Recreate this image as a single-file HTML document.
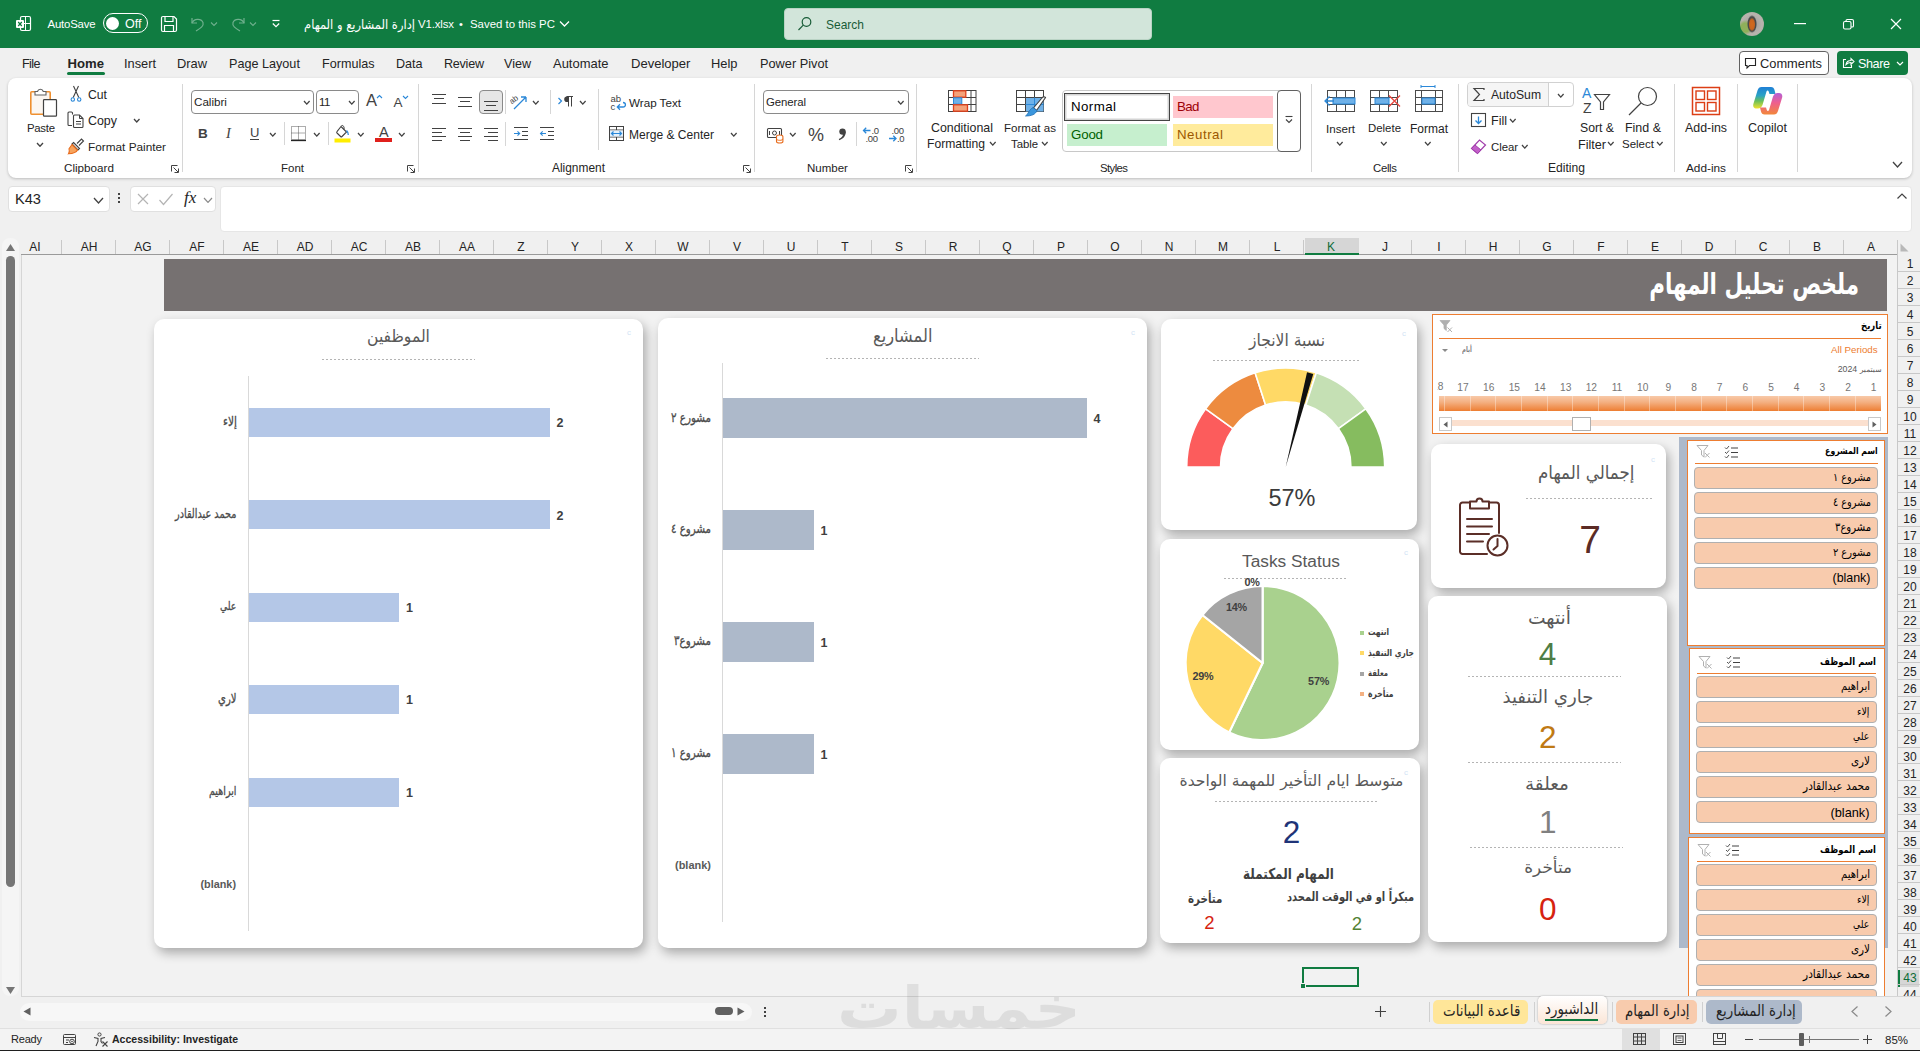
<!DOCTYPE html>
<html lang="ar">
<head>
<meta charset="utf-8">
<title>Excel</title>
<style>
*{box-sizing:border-box;margin:0;padding:0}
html,body{width:1920px;height:1051px;overflow:hidden;background:#f0f0f0}
body{font-family:"Liberation Sans","DejaVu Sans",sans-serif;font-size:12px;color:#242424;position:relative}
.abs{position:absolute}
.t{position:absolute;white-space:nowrap;line-height:1}
.ar{font-family:"DejaVu Sans","Liberation Sans",sans-serif;direction:rtl}
#titlebar{position:absolute;left:0;top:0;width:1920px;height:48px;background:#107c41}
#titlebar .t{color:#fff;font-size:12.5px}
#tabs .t{font-size:13.5px;color:#242424;top:56px}
#ribbon{position:absolute;left:8px;top:78px;width:1904px;height:100px;background:#fff;border-radius:8px;box-shadow:0 1px 3px rgba(0,0,0,.22)}
#ribbon .t{font-size:12.3px;color:#242424}
#ribbon .grp{font-size:12px;color:#3b3b3b}
.sep{position:absolute;width:1px;background:#d6d6d6}
.combo{position:absolute;border:1px solid #8a8a8a;border-radius:4px;background:#fff;height:24px}
.card{position:absolute;background:#fff;border-radius:10px;box-shadow:3px 5px 11px rgba(0,0,0,.3)}
.dash{position:absolute;height:1px;border:0;background:repeating-linear-gradient(90deg,#b4b4b4 0 2px,transparent 2px 4px)}
.colh{position:absolute;top:241px;font-size:12px;color:#242424;width:54px;text-align:center;line-height:12px}
.colsep{position:absolute;top:240px;width:1px;height:14px;background:#c8c8c8}
.rowh{position:absolute;left:1899px;width:22px;text-align:center;font-size:12px;color:#242424;line-height:12px}
.rowsep{position:absolute;left:1899px;width:22px;height:1px;background:#c8c8c8}
.sl{position:absolute;background:#fff;border:1px solid #ed7d31}
.sli{position:absolute;background:#f8cbad;border:1px solid #b5b5b5;border-radius:4px;height:19px;font-size:12.5px;color:#000;text-align:right;padding-right:6px;line-height:17px;direction:rtl}
.slh{position:absolute;font-weight:bold;font-size:11px;color:#000;direction:rtl;white-space:nowrap}
.big{font-family:"Liberation Sans","DejaVu Sans",sans-serif}
</style>
</head>
<body>
<div id="titlebar">
  <!-- excel icon -->
  <svg class="abs" style="left:15px;top:15px" width="18" height="18" viewBox="0 0 18 18"><rect x="5.5" y="1.5" width="10" height="14" rx="1.5" fill="none" stroke="#fff" stroke-width="1.2"/><line x1="10.5" y1="1.5" x2="10.5" y2="15.5" stroke="#fff" stroke-width="1"/><line x1="5.5" y1="8.5" x2="15.5" y2="8.5" stroke="#fff" stroke-width="1"/><rect x="1" y="5" width="8" height="8" rx="1" fill="#fff"/><path d="M3.2 7 L6.8 11 M6.8 7 L3.2 11" stroke="#107c41" stroke-width="1.2"/></svg>
  <div class="t" style="left:47.5px;top:19px;font-size:11.40px;letter-spacing:-0.20px;color:#fff;">AutoSave</div>
  <div class="abs" style="left:103px;top:13px;width:45px;height:20px;border:1.3px solid #fff;border-radius:10px"></div>
  <div class="abs" style="left:106px;top:17px;width:13px;height:13px;border-radius:6.500px;background:#fff"></div>
  <div class="t" style="left:125.0px;top:18px;font-size:12.54px;color:#fff;">Off</div>
  <!-- save -->
  <svg class="abs" style="left:160px;top:15px" width="18" height="18" viewBox="0 0 18 18" fill="none" stroke="#fff" stroke-width="1.2"><path d="M1.5 3 a1.5 1.5 0 0 1 1.5-1.5 h11 l2.5 2.5 v11 a1.5 1.5 0 0 1 -1.5 1.5 h-12 a1.5 1.5 0 0 1 -1.5 -1.5z"/><path d="M5 1.5v5h8v-5"/><path d="M4.5 16.5v-6h9v6"/></svg>
  <!-- undo / redo faded -->
  <svg class="abs" style="left:189px;top:15px" width="18" height="18" viewBox="0 0 18 18" fill="none" stroke="#6fb08d" stroke-width="1.2"><path d="M3 3v5h5"/><path d="M3 8 C5 3.5 12 3 14 7.5 C15 11 12 13 7 16"/></svg>
  <svg class="abs" style="left:210px;top:21px" width="8" height="6" viewBox="0 0 8 6" fill="none" stroke="#6fb08d" stroke-width="1.1"><path d="M1 1.5l3 3 3-3"/></svg>
  <svg class="abs" style="left:229px;top:15px" width="18" height="18" viewBox="0 0 18 18" fill="none" stroke="#6fb08d" stroke-width="1.2"><path d="M15 3v5h-5"/><path d="M15 8 C13 3.5 6 3 4 7.5 C3 11 6 13 11 16"/></svg>
  <svg class="abs" style="left:249px;top:21px" width="8" height="6" viewBox="0 0 8 6" fill="none" stroke="#6fb08d" stroke-width="1.1"><path d="M1 1.5l3 3 3-3"/></svg>
  <svg class="abs" style="left:271px;top:19px" width="10" height="10" viewBox="0 0 10 10" fill="none" stroke="#fff" stroke-width="1.2"><path d="M1.5 1.5h7"/><path d="M1.8 4.5l3.2 3.2 3.2-3.2"/></svg>
  <div class="t" style="left:304.0px;width:311.0px;text-align:left;direction:ltr;top:19px;font-size:12.90px;color:#fff;font-family:'DejaVu Sans',sans-serif;transform:scaleX(0.893);transform-origin:0 50%;"><span dir="rtl">إدارة المشاريع و المهام</span></div>
<div class="t" style="left:418.0px;top:19px;font-size:11.40px;letter-spacing:-0.12px;color:#fff;">V1.xlsx</div>
<div class="t" style="left:459.0px;top:19px;font-size:11.00px;letter-spacing:0.15px;color:#fff;">•</div>
<div class="t" style="left:470.0px;top:19px;font-size:11.41px;color:#fff;">Saved to this PC</div>
  <svg class="abs" style="left:559px;top:20px" width="11" height="8" viewBox="0 0 11 8" fill="none" stroke="#fff" stroke-width="1.3"><path d="M1 1.5l4.5 4.5 4.5-4.5"/></svg>
  <!-- search -->
  <div class="abs" style="left:784px;top:8px;width:368px;height:32px;background:#d2e5da;border-radius:4px;border:1px solid #b9d3c4"></div>
  <svg class="abs" style="left:797px;top:16px" width="16" height="16" viewBox="0 0 16 16" fill="none" stroke="#185c37" stroke-width="1.2"><circle cx="9.5" cy="6" r="4.3"/><path d="M6.3 9.2L1.5 14"/></svg>
  <div class="t" style="left:826.0px;top:19px;font-size:11.99px;color:#185c37;">Search</div>
  <!-- avatar -->
  <div class="abs" style="left:1740px;top:12px;width:24px;height:24px;border-radius:12px;background:radial-gradient(ellipse 3.500px 7px at 50% 52%,#d2691e 0,#c8641e 70%,rgba(200,100,30,0) 100%),radial-gradient(ellipse 5px 9px at 50% 50%,#4a4a4a 0,#4a4a4a 80%,rgba(74,74,74,0) 100%),radial-gradient(circle at 22% 65%,#8fb05a 0,#8fb05a 18%,rgba(143,176,90,0) 32%),radial-gradient(circle at 50% 50%,#9a9a9a 0,#b8b4ae 60%,#a8a29a 100%)"></div>
  <svg class="abs" style="left:1794px;top:23px" width="12" height="2" viewBox="0 0 12 2"><rect width="12" height="1.2" fill="#fff"/></svg>
  <svg class="abs" style="left:1842px;top:18px" width="13" height="13" viewBox="0 0 13 13" fill="none" stroke="#fff" stroke-width="1.100"><rect x="1.500" y="3.500" width="7.500" height="7.500" rx="1.500"/><path d="M4 3.500V2.800a1.300 1.300 0 0 1 1.300-1.300H10a1.500 1.500 0 0 1 1.500 1.500v4.700a1.300 1.300 0 0 1-1.300 1.300H9"/></svg>
  <svg class="abs" style="left:1890px;top:18px" width="12" height="12" viewBox="0 0 12 12" fill="none" stroke="#fff" stroke-width="1.2"><path d="M1 1l10 10M11 1L1 11"/></svg>
</div>
<div id="tabs">
  <div class="t" style="left:22.0px;top:58px;font-size:12.60px;letter-spacing:-0.60px;">File</div>
  <div class="t" style="left:67.5px;top:57px;font-size:13.14px;font-weight:bold;">Home</div>
  <div class="abs" style="left:67px;top:72px;width:37.500px;height:2.500px;background:#107c41;border-radius:1.5px"></div>
  <div class="t" style="left:124.0px;top:58px;font-size:12.80px;">Insert</div>
  <div class="t" style="left:177.0px;top:58px;font-size:12.86px;">Draw</div>
  <div class="t" style="left:229.0px;top:58px;font-size:12.64px;">Page Layout</div>
  <div class="t" style="left:322.0px;top:58px;font-size:12.60px;">Formulas</div>
  <div class="t" style="left:396.0px;top:58px;font-size:12.60px;letter-spacing:-0.04px;">Data</div>
  <div class="t" style="left:444.0px;top:58px;font-size:12.60px;letter-spacing:-0.26px;">Review</div>
  <div class="t" style="left:504.0px;top:58px;font-size:12.60px;letter-spacing:-0.03px;">View</div>
  <div class="t" style="left:553.0px;top:58px;font-size:12.97px;">Automate</div>
  <div class="t" style="left:631.0px;top:57px;font-size:13.05px;">Developer</div>
  <div class="t" style="left:711.0px;top:58px;font-size:12.89px;">Help</div>
  <div class="t" style="left:760.0px;top:58px;font-size:12.75px;">Power Pivot</div>
  <div class="abs" style="left:1739px;top:51px;width:90px;height:24px;border:1px solid #616161;border-radius:4px;background:#fff"></div>
  <svg class="abs" style="left:1743.500px;top:57px" width="13" height="13" viewBox="0 0 13 13" fill="none" stroke="#242424" stroke-width="1.1"><path d="M1.5 1.500h10v7h-6l-2.500 2.500v-2.500h-1.500z"/></svg>
  <div class="t" style="left:1760.0px;top:58px;font-size:12.83px;">Comments</div>
  <div class="abs" style="left:1837px;top:51px;width:71px;height:24px;border-radius:4px;background:#107c41"></div>
  <svg class="abs" style="left:1840.500px;top:56px" width="14" height="14" viewBox="0 0 14 14" fill="none" stroke="#fff" stroke-width="1.1"><path d="M5 3.500H2.500v8h8V9"/><path d="M5 8.500C5.500 5.500 7.500 4.500 10 4.500V2.500L13 5.500 10 8.500V6.500C8 6.500 6.500 7 5 8.500z"/></svg>
  <div class="t" style="left:1858.0px;top:58px;font-size:12.60px;letter-spacing:-0.41px;color:#fff;">Share</div>
  <svg class="abs" style="left:1896px;top:61px" width="8" height="6" viewBox="0 0 8 6" fill="none" stroke="#fff" stroke-width="1.2"><path d="M1 1l3 3 3-3"/></svg>
</div>
<div id="ribbon"></div>
<div id="rb" class="abs" style="left:0;top:0">
<svg class="abs" style="left:28px;top:85px" width="30" height="33" viewBox="0 0 30 33" ><rect x="2.800" y="6.800" width="19.400" height="22.400" rx="1" fill="#fbf6f1" stroke="#ef8f2f" stroke-width="1.600"/><path d="M7 6.500h2.500a3 3 0 0 1 5.800 0H18v3.500H7z" fill="#fff" stroke="#616161" stroke-width="1.100"/><rect x="15.500" y="14.700" width="13" height="16.500" rx=".800" fill="#fff" stroke="#424242" stroke-width="1.200"/></svg>
<div class="t" style="left:27.0px;top:123px;font-size:11.40px;letter-spacing:-0.29px;">Paste</div>
<svg class="abs" style="left:36.3px;top:142.0px" width="8.0" height="5.3" viewBox="0 0 8.0 5.3" fill="none" stroke="#424242" stroke-width="1.3"><path d="M1 1l3.00 3.30 3.00 -3.30"/></svg>
<svg class="abs" style="left:69px;top:85px" width="14" height="18" viewBox="0 0 14 18" ><path d="M4.500 1L9.800 12.500M9.500 1L4.200 12.500" stroke="#424242" stroke-width="1.100" fill="none"/><circle cx="3.800" cy="14.500" r="1.700" fill="none" stroke="#2b88d8" stroke-width="1.100"/><circle cx="10.200" cy="14.500" r="1.700" fill="none" stroke="#2b88d8" stroke-width="1.100"/></svg>
<div class="t" style="left:88.0px;top:89px;font-size:12.21px;">Cut</div>
<svg class="abs" style="left:67px;top:111px" width="18" height="18" viewBox="0 0 18 18" ><path d="M5.500 3.500V2a1 1 0 0 0-1-1H2a1 1 0 0 0-1 1v11.500a1 1 0 0 0 1 1h3" fill="none" stroke="#424242" stroke-width="1.100"/><path d="M6.500 5a1 1 0 0 1 1-1h5l3.500 3.500V15.500a1 1 0 0 1-1 1h-7.500a1 1 0 0 1-1-1z" fill="#fff" stroke="#424242" stroke-width="1.100"/><path d="M12.500 4v3.500H16M9 10.500h5M9 13h5" fill="none" stroke="#424242" stroke-width="1"/></svg>
<div class="t" style="left:88.0px;top:115px;font-size:12.42px;">Copy</div>
<svg class="abs" style="left:132.7px;top:118.2px" width="7.5" height="5.0" viewBox="0 0 7.5 5.0" fill="none" stroke="#424242" stroke-width="1.3"><path d="M1 1l2.75 3.03 2.75 -3.03"/></svg>
<svg class="abs" style="left:67px;top:137px" width="18" height="18" viewBox="0 0 18 18" ><path d="M10 6.500l4.500-4.500 2 2L12 8.500" fill="#fff" stroke="#424242" stroke-width="1.100"/><path d="M6.500 5.500l6 6-1.500 1.500-6-6z" fill="#fff" stroke="#424242" stroke-width="1.100"/><path d="M5 7.500l5.500 5.500c-1 2-3.500 3.500-9 3.800 1.500-2 1-3.500 .5-5z" fill="#f7a35c" stroke="#e86a1a" stroke-width="1.100"/></svg>
<div class="t" style="left:88.0px;top:142px;font-size:11.80px;">Format Painter</div>
<div class="t grp" style="left:64.0px;top:162px;font-size:11.68px;">Clipboard</div>
<svg class="abs" style="left:170px;top:164px" width="10" height="10" viewBox="0 0 10 10" ><path d="M1.500 7.500V1.500h6" fill="none" stroke="#424242" stroke-width="1"/><path d="M3.500 3.500l4.500 4.500M8.500 4.500v4h-4" fill="none" stroke="#424242" stroke-width="1"/></svg>
<div class="sep" style="left:182px;top:84px;height:88px;background:#d6d6d6"></div>
<div class="combo" style="left:191px;top:90px;width:123px"></div>
<div class="t" style="left:194.0px;top:96px;font-size:11.64px;">Calibri</div>
<svg class="abs" style="left:303.2px;top:99.5px" width="7.6" height="5.1" viewBox="0 0 7.6 5.1" fill="none" stroke="#424242" stroke-width="1.3"><path d="M1 1l2.80 3.08 2.80 -3.08"/></svg>
<div class="combo" style="left:316px;top:90px;width:43px"></div>
<div class="t" style="left:319.0px;top:97px;font-size:11.40px;letter-spacing:-0.60px;">11</div>
<svg class="abs" style="left:348.2px;top:99.5px" width="7.6" height="5.1" viewBox="0 0 7.6 5.1" fill="none" stroke="#424242" stroke-width="1.3"><path d="M1 1l2.80 3.08 2.80 -3.08"/></svg>
<div class="t" style="left:366.0px;top:92px;font-size:16.49px;color:#424242;">A</div>
<svg class="abs" style="left:375.5px;top:94px" width="7" height="5" viewBox="0 0 7 5" ><path d="M1 4l2.500-2.500L6 4" fill="none" stroke="#2b88d8" stroke-width="1.100"/></svg>
<div class="t" style="left:393.5px;top:96px;font-size:13.49px;color:#424242;">A</div>
<svg class="abs" style="left:401.5px;top:94.5px" width="7" height="5" viewBox="0 0 7 5" ><path d="M1 1l2.500 2.500L6 1" fill="none" stroke="#2b88d8" stroke-width="1.100"/></svg>
<div class="t" style="left:198.0px;top:127px;font-size:13.50px;letter-spacing:-0.60px;font-weight:bold;color:#424242;">B</div>
<div class="t" style="left:226.0px;top:126px;font-size:14.50px;letter-spacing:0.60px;color:#424242;font-style:italic;font-family:'Liberation Serif',serif;">I</div>
<div class="t" style="left:250.0px;top:126px;font-size:13.00px;letter-spacing:-0.60px;color:#424242;">U</div>
<div class="abs" style="left:250px;top:139px;width:9px;height:1px;background:#424242"></div>
<svg class="abs" style="left:269.2px;top:131.5px" width="7.6" height="5.1" viewBox="0 0 7.6 5.1" fill="none" stroke="#424242" stroke-width="1.3"><path d="M1 1l2.80 3.08 2.80 -3.08"/></svg>
<div class="sep" style="left:284px;top:122px;height:23px;background:#d6d6d6"></div>
<svg class="abs" style="left:290px;top:125px" width="16" height="17" viewBox="0 0 16 17" ><rect x="1.500" y="1.500" width="14" height="13" fill="none" stroke="#5a5a5a" stroke-width="1" stroke-dasharray="1 1"/><path d="M8.500 1.500v13M1.500 8h14" stroke="#5a5a5a" stroke-width="1" stroke-dasharray="1 1"/><path d="M1 15.500h15" stroke="#242424" stroke-width="1.300"/></svg>
<svg class="abs" style="left:313.2px;top:131.5px" width="7.6" height="5.1" viewBox="0 0 7.6 5.1" fill="none" stroke="#424242" stroke-width="1.3"><path d="M1 1l2.80 3.08 2.80 -3.08"/></svg>
<div class="sep" style="left:328px;top:122px;height:23px;background:#d6d6d6"></div>
<svg class="abs" style="left:334px;top:124px" width="17" height="19" viewBox="0 0 17 19" ><path d="M7 2.500l5.500 5.500-4.500 4.500a1 1 0 0 1-1.400 0L3 9a1 1 0 0 1 0-1.400z" fill="#fff" stroke="#424242" stroke-width="1.100"/><path d="M7.500 1.500C9.500 1 10.500 3 10 5.500" fill="none" stroke="#424242" stroke-width="1"/><path d="M12.500 6.500c1.500 1.500 2 3 1.800 4.500" fill="none" stroke="#2b88d8" stroke-width="1.300"/><rect x="0.500" y="14.500" width="16" height="4" fill="#ffee00"/></svg>
<svg class="abs" style="left:357.2px;top:131.5px" width="7.6" height="5.1" viewBox="0 0 7.6 5.1" fill="none" stroke="#424242" stroke-width="1.3"><path d="M1 1l2.80 3.08 2.80 -3.08"/></svg>
<div class="t" style="left:379.0px;top:125px;font-size:14.50px;letter-spacing:0.33px;color:#424242;">A</div>
<div class="abs" style="left:375px;top:138px;width:17px;height:4px;background:#e0201c"></div>
<svg class="abs" style="left:398.2px;top:131.5px" width="7.6" height="5.1" viewBox="0 0 7.6 5.1" fill="none" stroke="#424242" stroke-width="1.3"><path d="M1 1l2.80 3.08 2.80 -3.08"/></svg>
<div class="t grp" style="left:281.0px;top:163px;font-size:11.50px;">Font</div>
<svg class="abs" style="left:406px;top:164px" width="10" height="10" viewBox="0 0 10 10" ><path d="M1.500 7.500V1.500h6" fill="none" stroke="#424242" stroke-width="1"/><path d="M3.500 3.500l4.500 4.500M8.500 4.500v4h-4" fill="none" stroke="#424242" stroke-width="1"/></svg>
<div class="sep" style="left:418px;top:84px;height:88px;background:#d6d6d6"></div>
<svg class="abs" style="left:432px;top:94px" width="14" height="10" viewBox="0 0 14 10" shape-rendering="crispEdges"><rect x="0" y="0" width="14" height="1" fill="#424242"/><rect x="2" y="4" width="10" height="1" fill="#424242"/><rect x="0" y="9" width="14" height="1" fill="#424242"/></svg>
<svg class="abs" style="left:458px;top:97px" width="14" height="10" viewBox="0 0 14 10" shape-rendering="crispEdges"><rect x="0" y="0" width="14" height="1" fill="#424242"/><rect x="2" y="4" width="10" height="1" fill="#424242"/><rect x="0" y="9" width="14" height="1" fill="#424242"/></svg>
<div class="abs" style="left:479px;top:90px;width:24px;height:24px;border:1px solid #8a8a8a;border-radius:4px;background:#e6e6e6"></div>
<svg class="abs" style="left:484px;top:101px" width="14" height="10" viewBox="0 0 14 10" shape-rendering="crispEdges"><rect x="0" y="0" width="14" height="1" fill="#424242"/><rect x="2" y="4" width="10" height="1" fill="#424242"/><rect x="0" y="9" width="14" height="1" fill="#424242"/></svg>
<div class="sep" style="left:505px;top:90px;height:24px;background:#d6d6d6"></div>
<svg class="abs" style="left:510px;top:93px" width="20" height="18" viewBox="0 0 20 18" ><text x="1" y="9" font-size="8" font-family="Liberation Sans, sans-serif" fill="#424242" transform="rotate(-38 5 9)">ab</text><path d="M4 16L16 4M16 4h-5M16 4v5" fill="none" stroke="#2b88d8" stroke-width="1.300"/></svg>
<svg class="abs" style="left:532.2px;top:99.5px" width="7.6" height="5.1" viewBox="0 0 7.6 5.1" fill="none" stroke="#424242" stroke-width="1.3"><path d="M1 1l2.80 3.08 2.80 -3.08"/></svg>
<div class="sep" style="left:550px;top:90px;height:24px;background:#d6d6d6"></div>
<svg class="abs" style="left:557px;top:95px" width="17" height="13" viewBox="0 0 17 13" ><path d="M1.500 3l3 3-3 3" fill="none" stroke="#2b88d8" stroke-width="1.200"/><path d="M9.500 1.500h6.500M11.500 1.500v10M14.500 1.500v10" fill="none" stroke="#424242" stroke-width="1"/><path d="M11.500 1.500h-1.500a2.800 2.800 0 0 0 0 5.600h1.500z" fill="#424242"/></svg>
<svg class="abs" style="left:579.2px;top:99.5px" width="7.6" height="5.1" viewBox="0 0 7.6 5.1" fill="none" stroke="#424242" stroke-width="1.3"><path d="M1 1l2.80 3.08 2.80 -3.08"/></svg>
<div class="sep" style="left:598px;top:89px;height:61px;background:#d6d6d6"></div>
<svg class="abs" style="left:432px;top:128px" width="14" height="13" viewBox="0 0 14 13" shape-rendering="crispEdges"><rect x="0" y="0" width="14" height="1" fill="#424242"/><rect x="0" y="4" width="10" height="1" fill="#424242"/><rect x="0" y="8" width="14" height="1" fill="#424242"/><rect x="0" y="12" width="10" height="1" fill="#424242"/></svg>
<svg class="abs" style="left:458px;top:128px" width="14" height="13" viewBox="0 0 14 13" shape-rendering="crispEdges"><rect x="0" y="0" width="14" height="1" fill="#424242"/><rect x="2" y="4" width="10" height="1" fill="#424242"/><rect x="0" y="8" width="14" height="1" fill="#424242"/><rect x="2" y="12" width="10" height="1" fill="#424242"/></svg>
<svg class="abs" style="left:484px;top:128px" width="14" height="13" viewBox="0 0 14 13" shape-rendering="crispEdges"><rect x="0" y="0" width="14" height="1" fill="#424242"/><rect x="4" y="4" width="10" height="1" fill="#424242"/><rect x="0" y="8" width="14" height="1" fill="#424242"/><rect x="4" y="12" width="10" height="1" fill="#424242"/></svg>
<div class="sep" style="left:505px;top:122px;height:24px;background:#d6d6d6"></div>
<svg class="abs" style="left:513px;top:126px" width="16" height="16" viewBox="0 0 16 16" ><path d="M1 1.500h14M9 5.500h6M9 9.500h6M1 13.500h14" stroke="#424242" stroke-width="1.100"/><path d="M1 7.500h5.500M4.500 5.300L6.700 7.500 4.500 9.700" fill="none" stroke="#2b88d8" stroke-width="1.100"/></svg>
<svg class="abs" style="left:539px;top:126px" width="16" height="16" viewBox="0 0 16 16" ><path d="M1 1.500h14M9 5.500h6M9 9.500h6M1 13.500h14" stroke="#424242" stroke-width="1.100"/><path d="M1.500 7.500h5.500M3.700 5.300L1.500 7.500 3.700 9.700" fill="none" stroke="#2b88d8" stroke-width="1.100"/></svg>
<svg class="abs" style="left:610px;top:93px" width="18" height="19" viewBox="0 0 18 19" ><text x="0.500" y="8.500" font-size="9.500" font-family="Liberation Sans, sans-serif" fill="#424242">ab</text><text x="0.500" y="17" font-size="9.500" font-family="Liberation Sans, sans-serif" fill="#424242">c</text><path d="M13 9.500c3 0 3.500 4.500 0 4.500H7.500M10 11.300L7.300 14l2.700 2.700" fill="none" stroke="#2b88d8" stroke-width="1.300"/></svg>
<div class="t" style="left:629.0px;top:97px;font-size:11.65px;">Wrap Text</div>
<svg class="abs" style="left:608px;top:125px" width="18" height="18" viewBox="0 0 18 18" ><rect x="1.500" y="1.500" width="14" height="14" fill="none" stroke="#424242" stroke-width="1"/><path d="M1.500 5h14M1.500 12h14M8.500 1.500V5M8.500 12v3.500" stroke="#424242" stroke-width="1"/><rect x="2" y="5.500" width="13" height="6" fill="#e3f0fb"/><path d="M3.500 8.500h10M5.500 6.500l-2 2 2 2M11.500 6.500l2 2-2 2" fill="none" stroke="#2b88d8" stroke-width="1.200"/></svg>
<div class="t" style="left:629.0px;top:129px;font-size:12.04px;">Merge &amp; Center</div>
<svg class="abs" style="left:730.2px;top:131.5px" width="7.6" height="5.1" viewBox="0 0 7.6 5.1" fill="none" stroke="#424242" stroke-width="1.3"><path d="M1 1l2.80 3.08 2.80 -3.08"/></svg>
<div class="t grp" style="left:552.0px;top:163px;font-size:11.92px;">Alignment</div>
<svg class="abs" style="left:742px;top:164px" width="10" height="10" viewBox="0 0 10 10" ><path d="M1.500 7.500V1.500h6" fill="none" stroke="#424242" stroke-width="1"/><path d="M3.500 3.500l4.500 4.500M8.500 4.500v4h-4" fill="none" stroke="#424242" stroke-width="1"/></svg>
<div class="sep" style="left:754px;top:84px;height:88px;background:#d6d6d6"></div>
<div class="combo" style="left:763px;top:90px;width:146px"></div>
<div class="t" style="left:766.0px;top:97px;font-size:11.40px;letter-spacing:-0.09px;">General</div>
<svg class="abs" style="left:897.2px;top:99.5px" width="7.6" height="5.1" viewBox="0 0 7.6 5.1" fill="none" stroke="#424242" stroke-width="1.3"><path d="M1 1l2.80 3.08 2.80 -3.08"/></svg>
<svg class="abs" style="left:766px;top:126px" width="19" height="18" viewBox="0 0 19 18" ><rect x="1.500" y="2.500" width="14" height="9" rx="1" fill="#fff" stroke="#424242" stroke-width="1.100"/><circle cx="8.500" cy="7" r="2" fill="none" stroke="#424242" stroke-width="1"/><path d="M3.500 5v4M13.500 5v4" stroke="#424242" stroke-width="1"/><path d="M10.500 10.500c0-1 1.500-1.500 3.200-1.500s3.200.5 3.200 1.500v5c0 1-1.500 1.500-3.200 1.500s-3.200-.5-3.200-1.500z" fill="#fff" stroke="#e86a1a" stroke-width="1.100"/><path d="M10.500 12.800c0 1 1.500 1.500 3.200 1.500s3.200-.5 3.200-1.500" fill="none" stroke="#e86a1a" stroke-width="1"/></svg>
<svg class="abs" style="left:789.2px;top:131.5px" width="7.6" height="5.1" viewBox="0 0 7.6 5.1" fill="none" stroke="#424242" stroke-width="1.3"><path d="M1 1l2.80 3.08 2.80 -3.08"/></svg>
<div class="t" style="left:808.0px;top:126px;font-size:17.99px;color:#424242;">%</div>
<svg class="abs" style="left:836px;top:126px" width="12" height="16" viewBox="0 0 12 16" ><circle cx="6.500" cy="5.600" r="3.200" fill="#424242"/><path d="M9.700 5.300C10 10 7.300 12.800 3.300 14.200L2.800 13.100C5.800 11.800 7 10 7 8z" fill="#424242"/></svg>
<div class="sep" style="left:856px;top:122px;height:24px;background:#d6d6d6"></div>
<svg class="abs" style="left:861px;top:125px" width="20" height="18" viewBox="0 0 20 18" ><path d="M2.500 5.500h7M5.200 2.800L2.500 5.500l2.700 2.700" fill="none" stroke="#2b88d8" stroke-width="1.300"/><text x="10.500" y="9" font-size="9.500" font-family="Liberation Sans, sans-serif" fill="#424242" letter-spacing="-.3">.0</text><text x="4.500" y="17" font-size="9.500" font-family="Liberation Sans, sans-serif" fill="#424242" letter-spacing="-.3">.00</text></svg>
<svg class="abs" style="left:887px;top:125px" width="20" height="18" viewBox="0 0 20 18" ><text x="4.500" y="9" font-size="9.500" font-family="Liberation Sans, sans-serif" fill="#424242" letter-spacing="-.3">.00</text><path d="M2 13.500h7M6.300 10.800L9 13.500l-2.700 2.700" fill="none" stroke="#2b88d8" stroke-width="1.300"/><text x="10" y="17" font-size="9.500" font-family="Liberation Sans, sans-serif" fill="#424242" letter-spacing="-.3">.0</text></svg>
<div class="t grp" style="left:807.0px;top:163px;font-size:11.53px;">Number</div>
<svg class="abs" style="left:904px;top:164px" width="10" height="10" viewBox="0 0 10 10" ><path d="M1.500 7.500V1.500h6" fill="none" stroke="#424242" stroke-width="1"/><path d="M3.500 3.500l4.500 4.500M8.500 4.500v4h-4" fill="none" stroke="#424242" stroke-width="1"/></svg>
<div class="sep" style="left:916px;top:84px;height:88px;background:#d6d6d6"></div>
<svg class="abs" style="left:947px;top:89px" width="31" height="24" viewBox="0 0 31 24" ><rect x="1.500" y="1.500" width="27.500" height="21" fill="#fff" stroke="#424242" stroke-width="1"/><path d="M1.500 8.500h27.500M1.500 15.500h27.500M6.500 1.500v21M24 1.500v21" stroke="#424242" stroke-width="1"/><rect x="6.500" y="1.800" width="12.300" height="6.400" fill="#f4a27a" stroke="#e0401c" stroke-width="1.300"/><rect x="6.500" y="8.800" width="8.300" height="6.400" fill="#6fb1e8" stroke="#2b88d8" stroke-width="1"/><rect x="6.500" y="15.800" width="14" height="6.400" fill="#f4a27a" stroke="#e0401c" stroke-width="1.300"/></svg>
<div class="t" style="left:931.0px;top:122px;font-size:12.39px;">Conditional</div>
<div class="t" style="left:927.0px;top:138px;font-size:12.14px;">Formatting</div>
<svg class="abs" style="left:988.7px;top:141.3px" width="7.6" height="5.1" viewBox="0 0 7.6 5.1" fill="none" stroke="#424242" stroke-width="1.3"><path d="M1 1l2.80 3.08 2.80 -3.08"/></svg>
<svg class="abs" style="left:1015px;top:89px" width="32" height="29" viewBox="0 0 32 29" ><rect x="1.500" y="1.500" width="27" height="21" fill="#fff" stroke="#424242" stroke-width="1"/><rect x="10.500" y="8.500" width="18" height="14" fill="#6fb1e8"/><path d="M1.500 8.500h27M1.500 15.500h27M10.500 1.500v21M19.500 1.500v21" stroke="#424242" stroke-width="1"/><path d="M10.500 15.500h18M19.500 8.500v14" stroke="#2b88d8" stroke-width="1"/><path d="M30.500 8.500c-1.500-1.500-3-.5-4 1L18.500 19l3 2.500z" fill="#fff" stroke="#424242" stroke-width="1.100"/><path d="M18 18.500l4 3c-1.500 4-5.500 5.500-11.500 5.500 3-2 3-6 7.500-8.500z" fill="#3a96dd" stroke="#1f6fb5" stroke-width=".800"/></svg>
<div class="t" style="left:1004.0px;top:123px;font-size:11.55px;">Format as</div>
<div class="t" style="left:1011.0px;top:139px;font-size:11.40px;letter-spacing:-0.06px;">Table</div>
<svg class="abs" style="left:1041.2px;top:141.3px" width="7.6" height="5.1" viewBox="0 0 7.6 5.1" fill="none" stroke="#424242" stroke-width="1.3"><path d="M1 1l2.80 3.08 2.80 -3.08"/></svg>
<div class="abs" style="left:1062px;top:90px;width:239px;height:62px;border:1px solid #c8c8c8;border-radius:4px;background:#fff"></div>
<div class="abs" style="left:1277px;top:90px;width:24px;height:62px;border:1px solid #616161;border-radius:4px;background:#fff"></div>
<svg class="abs" style="left:1284px;top:115px" width="10" height="10" viewBox="0 0 10 10" ><path d="M1.500 1.500h7" stroke="#424242" stroke-width="1.100"/><path d="M2 4.500l3 3 3-3" fill="none" stroke="#424242" stroke-width="1.100"/></svg>
<div class="abs" style="left:1064px;top:93px;width:106px;height:28px;border:1px solid #444;background:#fff;box-shadow:inset 0 0 0 1.500px #d4d4d4"></div>
<div class="t" style="left:1071.0px;top:100px;font-size:13.30px;letter-spacing:0.43px;color:#000;">Normal</div>
<div class="abs" style="left:1173px;top:96px;width:100px;height:22px;background:#ffc7ce"></div>
<div class="t" style="left:1177.0px;top:100px;font-size:13.30px;letter-spacing:-0.60px;color:#9c0006;">Bad</div>
<div class="abs" style="left:1067px;top:124px;width:100px;height:22px;background:#c6efce"></div>
<div class="t" style="left:1071.0px;top:128px;font-size:13.30px;letter-spacing:-0.18px;color:#006100;">Good</div>
<div class="abs" style="left:1173px;top:124px;width:100px;height:22px;background:#ffeb9c"></div>
<div class="t" style="left:1177.0px;top:128px;font-size:13.30px;letter-spacing:0.52px;color:#9c5700;">Neutral</div>
<div class="t grp" style="left:1100.0px;top:163px;font-size:11.40px;letter-spacing:-0.60px;">Styles</div>
<div class="sep" style="left:1311px;top:84px;height:88px;background:#d6d6d6"></div>
<svg class="abs" style="left:1324px;top:88px" width="34" height="26" viewBox="0 0 34 26" ><rect x="3.500" y="2.500" width="27" height="21" fill="#fff" stroke="#4a4a4a" stroke-width="1"/><path d="M3.500 9.500h27M3.500 16.500h27M12.500 2.500v21M21.500 2.500v21" stroke="#4a4a4a" stroke-width="1"/><rect x="9" y="10" width="22" height="6" fill="#6fb1e8" stroke="#2b88d8" stroke-width="1"/><path d="M1 13h9M5.500 8.500L1 13l4.500 4.500" fill="none" stroke="#2b88d8" stroke-width="1.300"/></svg>
<div class="t" style="left:1326.0px;top:123px;font-size:11.60px;">Insert</div>
<svg class="abs" style="left:1336.2px;top:141.3px" width="7.6" height="5.1" viewBox="0 0 7.6 5.1" fill="none" stroke="#424242" stroke-width="1.3"><path d="M1 1l2.80 3.08 2.80 -3.08"/></svg>
<svg class="abs" style="left:1369px;top:88px" width="34" height="26" viewBox="0 0 34 26" ><rect x="1.500" y="2.500" width="27" height="21" fill="#fff" stroke="#4a4a4a" stroke-width="1"/><path d="M1.500 9.500h27M1.500 16.500h27M10.500 2.500v21M19.500 2.500v21" stroke="#4a4a4a" stroke-width="1"/><rect x="6" y="10" width="14" height="6" fill="#6fb1e8" stroke="#2b88d8" stroke-width="1"/><path d="M20 7.500l11 11M31 7.500l-11 11" stroke="#e8473f" stroke-width="1.300"/></svg>
<div class="t" style="left:1368.0px;top:123px;font-size:11.42px;">Delete</div>
<svg class="abs" style="left:1380.2px;top:141.3px" width="7.6" height="5.1" viewBox="0 0 7.6 5.1" fill="none" stroke="#424242" stroke-width="1.3"><path d="M1 1l2.80 3.08 2.80 -3.08"/></svg>
<svg class="abs" style="left:1413px;top:84px" width="32" height="30" viewBox="0 0 32 30" ><path d="M8 2.500h14M8 1v3M22 1v3" stroke="#2b88d8" stroke-width="1"/><rect x="2.500" y="6.500" width="27" height="21" fill="#fff" stroke="#4a4a4a" stroke-width="1"/><path d="M2.500 13.500h27M2.500 20.500h27M8.500 6.500v21M22.500 6.500v21" stroke="#4a4a4a" stroke-width="1"/><rect x="9" y="14" width="13" height="6" fill="#6fb1e8" stroke="#2b88d8" stroke-width="1"/></svg>
<div class="t" style="left:1410.0px;top:123px;font-size:12.00px;">Format</div>
<svg class="abs" style="left:1424.2px;top:140.8px" width="7.6" height="5.1" viewBox="0 0 7.6 5.1" fill="none" stroke="#424242" stroke-width="1.3"><path d="M1 1l2.80 3.08 2.80 -3.08"/></svg>
<div class="t grp" style="left:1373.0px;top:163px;font-size:11.40px;letter-spacing:-0.33px;">Cells</div>
<div class="sep" style="left:1458px;top:84px;height:88px;background:#d6d6d6"></div>
<div class="abs" style="left:1467px;top:82px;width:107px;height:25px;border:1px solid #d1d1d1;border-radius:4px;background:#fff"></div>
<div class="abs" style="left:1468px;top:83px;width:81px;height:23px;background:#f5f5f5;border-right:1px solid #d1d1d1;border-radius:3px 0 0 3px"></div>
<svg class="abs" style="left:1472px;top:87px" width="14" height="15" viewBox="0 0 14 15" ><path d="M12 3V1.500H2L7.500 7.500 2 13.500h10V12" fill="none" stroke="#424242" stroke-width="1.200"/></svg>
<div class="t" style="left:1491.0px;top:89px;font-size:12.16px;">AutoSum</div>
<svg class="abs" style="left:1557.2px;top:92.5px" width="7.6" height="5.1" viewBox="0 0 7.6 5.1" fill="none" stroke="#424242" stroke-width="1.3"><path d="M1 1l2.80 3.08 2.80 -3.08"/></svg>
<svg class="abs" style="left:1470px;top:112px" width="17" height="17" viewBox="0 0 17 17" ><rect x="1.500" y="1.500" width="14" height="13" fill="#fff" stroke="#424242" stroke-width="1.100"/><path d="M8.500 4.500v7M5.500 8.500l3 3 3-3" fill="none" stroke="#2b88d8" stroke-width="1.300"/></svg>
<div class="t" style="left:1491.0px;top:115px;font-size:12.53px;">Fill</div>
<svg class="abs" style="left:1508.7px;top:117.8px" width="7.6" height="5.1" viewBox="0 0 7.6 5.1" fill="none" stroke="#424242" stroke-width="1.3"><path d="M1 1l2.80 3.08 2.80 -3.08"/></svg>
<svg class="abs" style="left:1470px;top:138px" width="17" height="17" viewBox="0 0 17 17" ><path d="M1.500 10.500L9.500 2l6 5-8 8.500z" fill="#fff" stroke="#a13dab" stroke-width="1.200"/><path d="M1.500 10.500L5 7l6 5-3.500 3.500z" fill="#c25fc9" stroke="#a13dab" stroke-width="1"/></svg>
<div class="t" style="left:1491.0px;top:142px;font-size:11.40px;letter-spacing:-0.06px;">Clear</div>
<svg class="abs" style="left:1520.7px;top:144.1px" width="7.6" height="5.1" viewBox="0 0 7.6 5.1" fill="none" stroke="#424242" stroke-width="1.3"><path d="M1 1l2.80 3.08 2.80 -3.08"/></svg>
<svg class="abs" style="left:1581px;top:86px" width="31" height="30" viewBox="0 0 31 30" ><text x="1" y="12" font-size="14" font-family="Liberation Sans, sans-serif" fill="#2b88d8">A</text><text x="2" y="27" font-size="14" font-family="Liberation Sans, sans-serif" fill="#424242">Z</text><path d="M13.500 8.500h15l-6 7.500v7.500h-3V16z" fill="#fff" stroke="#424242" stroke-width="1.200"/></svg>
<div class="t" style="left:1580.0px;top:122px;font-size:12.24px;">Sort &amp;</div>
<div class="t" style="left:1578.0px;top:139px;font-size:12.60px;">Filter</div>
<svg class="abs" style="left:1607.2px;top:140.7px" width="7.6" height="5.1" viewBox="0 0 7.6 5.1" fill="none" stroke="#424242" stroke-width="1.3"><path d="M1 1l2.80 3.08 2.80 -3.08"/></svg>
<svg class="abs" style="left:1627px;top:86px" width="32" height="30" viewBox="0 0 32 30" ><circle cx="20.500" cy="10.500" r="9" fill="#fff" stroke="#424242" stroke-width="1.200"/><path d="M14 17L2 29" stroke="#424242" stroke-width="1.300"/></svg>
<div class="t" style="left:1625.0px;top:122px;font-size:12.46px;">Find &amp;</div>
<div class="t" style="left:1622.0px;top:139px;font-size:11.51px;">Select</div>
<svg class="abs" style="left:1656.2px;top:140.7px" width="7.6" height="5.1" viewBox="0 0 7.6 5.1" fill="none" stroke="#424242" stroke-width="1.3"><path d="M1 1l2.80 3.08 2.80 -3.08"/></svg>
<div class="t grp" style="left:1548.0px;top:162px;font-size:12.10px;">Editing</div>
<div class="sep" style="left:1674px;top:84px;height:88px;background:#d6d6d6"></div>
<svg class="abs" style="left:1691px;top:86px" width="30" height="30" viewBox="0 0 30 30" ><rect x="1.500" y="1.500" width="27" height="27" fill="#fff" stroke="#dc3e15" stroke-width="1.500"/><rect x="5" y="5" width="8.500" height="8.500" fill="none" stroke="#dc3e15" stroke-width="1.400"/><rect x="16.500" y="5" width="8.500" height="8.500" fill="none" stroke="#dc3e15" stroke-width="1.400"/><rect x="5" y="16.500" width="8.500" height="8.500" fill="none" stroke="#dc3e15" stroke-width="1.400"/><rect x="16.500" y="16.500" width="8.500" height="8.500" fill="none" stroke="#dc3e15" stroke-width="1.400"/></svg>
<div class="t" style="left:1685.0px;top:122px;font-size:12.39px;">Add-ins</div>
<div class="t grp" style="left:1686.0px;top:163px;font-size:11.80px;">Add-ins</div>
<div class="sep" style="left:1737px;top:84px;height:88px;background:#d6d6d6"></div>
<svg class="abs" style="left:1752px;top:86px" width="33" height="30" viewBox="0 0 33 30" ><defs><linearGradient id="cg1" x1="0" y1="0" x2="0" y2="1"><stop offset="0" stop-color="#1f7fd6"/><stop offset=".4" stop-color="#2aa3c4"/><stop offset=".65" stop-color="#6abf5a"/><stop offset="1" stop-color="#f2e22e"/></linearGradient><linearGradient id="cg2" x1="0" y1="0" x2="0" y2="1"><stop offset="0" stop-color="#b45fd6"/><stop offset=".45" stop-color="#ee5f8f"/><stop offset="1" stop-color="#f2873a"/></linearGradient></defs><path d="M9.500 1H19c2 0 3 1 3.500 3l1 4h-6l-.8-2.500c-.5-1.300-1.700-1.300-2.200 0L10.500 19c-1 2.500-2.500 3.500-4.500 3.500H4.500C2 22.500.5 20.500 1.500 17.500L5.500 4.500C6.300 2 7.500 1 9.500 1z" fill="url(#cg1)"/><path d="M22 28.500h-9.500c-2 0-3-1-3.500-3l-1-4h6l.8 2.500c.5 1.300 1.700 1.300 2.200 0L21 10.500c1-2.500 2.500-3.500 4.500-3.500H27c2.500 0 4 2 3 5l-4 13c-.8 2.500-2 3.500-4 3.500z" fill="url(#cg2)"/></svg>
<div class="t" style="left:1748.0px;top:122px;font-size:12.53px;">Copilot</div>
<div class="sep" style="left:1797px;top:84px;height:88px;background:#d6d6d6"></div>
<svg class="abs" style="left:1891.7px;top:161.1px" width="11.0" height="7.0" viewBox="0 0 11.0 7.0" fill="none" stroke="#424242" stroke-width="1.3"><path d="M1 1l4.50 4.95 4.50 -4.95"/></svg>
</div>
<div class="abs" style="left:8px;top:186px;width:102px;height:26px;background:#fff;border:1px solid #e0e0e0;border-radius:4px"></div>
<div class="t" style="left:15.0px;top:192px;font-size:14.61px;">K43</div>
<svg class="abs" style="left:92.5px;top:196.5px" width="11.0" height="7.0" viewBox="0 0 11.0 7.0" fill="none" stroke="#424242" stroke-width="1.3"><path d="M1 1l4.50 4.95 4.50 -4.95"/></svg>
<div class="abs" style="left:118px;top:193px;width:2px;height:2px;background:#424242;box-shadow:0 4px 0 #424242,0 8px 0 #424242"></div>
<div class="abs" style="left:130px;top:186px;width:86px;height:26px;background:#fff;border:1px solid #e0e0e0;border-radius:4px"></div>
<svg class="abs" style="left:136px;top:192px" width="14" height="14" viewBox="0 0 14 14" ><path d="M2 2l10 10M12 2L2 12" stroke="#b4b4b4" stroke-width="1.200"/></svg>
<svg class="abs" style="left:158px;top:192px" width="16" height="14" viewBox="0 0 16 14" ><path d="M1.500 8l4 4.500L14.500 2" fill="none" stroke="#b4b4b4" stroke-width="1.200"/></svg>
<div class="t" style="left:184px;top:189px;font-family:'Liberation Serif',serif;font-style:italic;font-size:17px;color:#242424">fx</div>
<svg class="abs" style="left:203.0px;top:196.8px" width="10.0" height="6.4" viewBox="0 0 10.0 6.4" fill="none" stroke="#8a8a8a" stroke-width="1.2"><path d="M1 1l4.00 4.40 4.00 -4.40"/></svg>
<div class="abs" style="left:220px;top:186px;width:1692px;height:46px;background:#fff;border:1px solid #e6e6e6;border-radius:4px"></div>
<svg class="abs" style="left:1896px;top:192px" width="12" height="8" viewBox="0 0 12 8" ><path d="M1.500 6.500l4.500-4.500 4.500 4.500" fill="none" stroke="#424242" stroke-width="1.200"/></svg>
<div class="abs" style="left:21px;top:255px;width:1877px;height:741px;background:#f2f2f2"></div>
<div class="abs" style="left:21px;top:254px;width:1877px;height:1px;background:#9a9a9a"></div>
<div class="colh" style="left:1844px">A</div>
<div class="colsep" style="left:1843px"></div>
<div class="colh" style="left:1790px">B</div>
<div class="colsep" style="left:1789px"></div>
<div class="colh" style="left:1736px">C</div>
<div class="colsep" style="left:1735px"></div>
<div class="colh" style="left:1682px">D</div>
<div class="colsep" style="left:1681px"></div>
<div class="colh" style="left:1628px">E</div>
<div class="colsep" style="left:1627px"></div>
<div class="colh" style="left:1574px">F</div>
<div class="colsep" style="left:1573px"></div>
<div class="colh" style="left:1520px">G</div>
<div class="colsep" style="left:1519px"></div>
<div class="colh" style="left:1466px">H</div>
<div class="colsep" style="left:1465px"></div>
<div class="colh" style="left:1412px">I</div>
<div class="colsep" style="left:1411px"></div>
<div class="colh" style="left:1358px">J</div>
<div class="colsep" style="left:1357px"></div>
<div class="abs" style="left:1305px;top:238px;width:54px;height:17px;background:#d6d6d6;border-bottom:2px solid #107c41"></div>
<div class="colh" style="left:1304px;color:#0e6b38">K</div>
<div class="colsep" style="left:1303px"></div>
<div class="colh" style="left:1250px">L</div>
<div class="colsep" style="left:1249px"></div>
<div class="colh" style="left:1196px">M</div>
<div class="colsep" style="left:1195px"></div>
<div class="colh" style="left:1142px">N</div>
<div class="colsep" style="left:1141px"></div>
<div class="colh" style="left:1088px">O</div>
<div class="colsep" style="left:1087px"></div>
<div class="colh" style="left:1034px">P</div>
<div class="colsep" style="left:1033px"></div>
<div class="colh" style="left:980px">Q</div>
<div class="colsep" style="left:979px"></div>
<div class="colh" style="left:926px">R</div>
<div class="colsep" style="left:925px"></div>
<div class="colh" style="left:872px">S</div>
<div class="colsep" style="left:871px"></div>
<div class="colh" style="left:818px">T</div>
<div class="colsep" style="left:817px"></div>
<div class="colh" style="left:764px">U</div>
<div class="colsep" style="left:763px"></div>
<div class="colh" style="left:710px">V</div>
<div class="colsep" style="left:709px"></div>
<div class="colh" style="left:656px">W</div>
<div class="colsep" style="left:655px"></div>
<div class="colh" style="left:602px">X</div>
<div class="colsep" style="left:601px"></div>
<div class="colh" style="left:548px">Y</div>
<div class="colsep" style="left:547px"></div>
<div class="colh" style="left:494px">Z</div>
<div class="colsep" style="left:493px"></div>
<div class="colh" style="left:440px">AA</div>
<div class="colsep" style="left:439px"></div>
<div class="colh" style="left:386px">AB</div>
<div class="colsep" style="left:385px"></div>
<div class="colh" style="left:332px">AC</div>
<div class="colsep" style="left:331px"></div>
<div class="colh" style="left:278px">AD</div>
<div class="colsep" style="left:277px"></div>
<div class="colh" style="left:224px">AE</div>
<div class="colsep" style="left:223px"></div>
<div class="colh" style="left:170px">AF</div>
<div class="colsep" style="left:169px"></div>
<div class="colh" style="left:116px">AG</div>
<div class="colsep" style="left:115px"></div>
<div class="colh" style="left:62px">AH</div>
<div class="colsep" style="left:61px"></div>
<div class="colh" style="left:8px">AI</div>
<div class="abs" style="left:1897px;top:240px;width:1px;height:756px;background:#c8c8c8"></div>
<svg class="abs" style="left:1900px;top:243px" width="9" height="9" viewBox="0 0 9 9" ><path d="M.5 .5v8h8z" fill="#b8b8b8"/></svg>
<div class="abs" style="left:1898px;top:255px;width:22px;height:741px;overflow:hidden">
<div class="rowh" style="left:1px;top:3px">1</div><div class="rowsep" style="left:0;top:16px"></div>
<div class="rowh" style="left:1px;top:20px">2</div><div class="rowsep" style="left:0;top:33px"></div>
<div class="rowh" style="left:1px;top:37px">3</div><div class="rowsep" style="left:0;top:50px"></div>
<div class="rowh" style="left:1px;top:54px">4</div><div class="rowsep" style="left:0;top:67px"></div>
<div class="rowh" style="left:1px;top:71px">5</div><div class="rowsep" style="left:0;top:84px"></div>
<div class="rowh" style="left:1px;top:88px">6</div><div class="rowsep" style="left:0;top:101px"></div>
<div class="rowh" style="left:1px;top:105px">7</div><div class="rowsep" style="left:0;top:118px"></div>
<div class="rowh" style="left:1px;top:122px">8</div><div class="rowsep" style="left:0;top:135px"></div>
<div class="rowh" style="left:1px;top:139px">9</div><div class="rowsep" style="left:0;top:152px"></div>
<div class="rowh" style="left:1px;top:156px">10</div><div class="rowsep" style="left:0;top:169px"></div>
<div class="rowh" style="left:1px;top:173px">11</div><div class="rowsep" style="left:0;top:186px"></div>
<div class="rowh" style="left:1px;top:190px">12</div><div class="rowsep" style="left:0;top:203px"></div>
<div class="rowh" style="left:1px;top:207px">13</div><div class="rowsep" style="left:0;top:220px"></div>
<div class="rowh" style="left:1px;top:224px">14</div><div class="rowsep" style="left:0;top:237px"></div>
<div class="rowh" style="left:1px;top:241px">15</div><div class="rowsep" style="left:0;top:254px"></div>
<div class="rowh" style="left:1px;top:258px">16</div><div class="rowsep" style="left:0;top:271px"></div>
<div class="rowh" style="left:1px;top:275px">17</div><div class="rowsep" style="left:0;top:288px"></div>
<div class="rowh" style="left:1px;top:292px">18</div><div class="rowsep" style="left:0;top:305px"></div>
<div class="rowh" style="left:1px;top:309px">19</div><div class="rowsep" style="left:0;top:322px"></div>
<div class="rowh" style="left:1px;top:326px">20</div><div class="rowsep" style="left:0;top:339px"></div>
<div class="rowh" style="left:1px;top:343px">21</div><div class="rowsep" style="left:0;top:356px"></div>
<div class="rowh" style="left:1px;top:360px">22</div><div class="rowsep" style="left:0;top:373px"></div>
<div class="rowh" style="left:1px;top:377px">23</div><div class="rowsep" style="left:0;top:390px"></div>
<div class="rowh" style="left:1px;top:394px">24</div><div class="rowsep" style="left:0;top:407px"></div>
<div class="rowh" style="left:1px;top:411px">25</div><div class="rowsep" style="left:0;top:424px"></div>
<div class="rowh" style="left:1px;top:428px">26</div><div class="rowsep" style="left:0;top:441px"></div>
<div class="rowh" style="left:1px;top:445px">27</div><div class="rowsep" style="left:0;top:458px"></div>
<div class="rowh" style="left:1px;top:462px">28</div><div class="rowsep" style="left:0;top:475px"></div>
<div class="rowh" style="left:1px;top:479px">29</div><div class="rowsep" style="left:0;top:492px"></div>
<div class="rowh" style="left:1px;top:496px">30</div><div class="rowsep" style="left:0;top:508px"></div>
<div class="rowh" style="left:1px;top:513px">31</div><div class="rowsep" style="left:0;top:525px"></div>
<div class="rowh" style="left:1px;top:530px">32</div><div class="rowsep" style="left:0;top:542px"></div>
<div class="rowh" style="left:1px;top:547px">33</div><div class="rowsep" style="left:0;top:559px"></div>
<div class="rowh" style="left:1px;top:564px">34</div><div class="rowsep" style="left:0;top:576px"></div>
<div class="rowh" style="left:1px;top:581px">35</div><div class="rowsep" style="left:0;top:593px"></div>
<div class="rowh" style="left:1px;top:598px">36</div><div class="rowsep" style="left:0;top:610px"></div>
<div class="rowh" style="left:1px;top:615px">37</div><div class="rowsep" style="left:0;top:627px"></div>
<div class="rowh" style="left:1px;top:632px">38</div><div class="rowsep" style="left:0;top:644px"></div>
<div class="rowh" style="left:1px;top:649px">39</div><div class="rowsep" style="left:0;top:661px"></div>
<div class="rowh" style="left:1px;top:666px">40</div><div class="rowsep" style="left:0;top:678px"></div>
<div class="rowh" style="left:1px;top:683px">41</div><div class="rowsep" style="left:0;top:695px"></div>
<div class="rowh" style="left:1px;top:700px">42</div><div class="rowsep" style="left:0;top:712px"></div>
<div class="abs" style="left:0;top:714.5px;width:21px;height:17px;background:#d6d6d6;border-left:2px solid #107c41"></div><div class="rowh" style="left:1px;top:717px;color:#0e6b38">43</div><div class="rowsep" style="left:0;top:729px"></div>
<div class="rowh" style="left:1px;top:734px">44</div><div class="rowsep" style="left:0;top:746px"></div>
</div>
<div class="abs" style="left:2px;top:238px;width:17px;height:758px;background:#f5f5f5;border-radius:8px"></div>
<svg class="abs" style="left:5px;top:243px" width="11" height="9" viewBox="0 0 11 9" ><path d="M1 8h9L5.500 1z" fill="#767676"/></svg>
<div class="abs" style="left:6px;top:256px;width:9px;height:631px;background:#767676;border-radius:4.500px"></div>
<svg class="abs" style="left:5px;top:986px" width="11" height="9" viewBox="0 0 11 9" ><path d="M1 1h9L5.500 8z" fill="#767676"/></svg>
<div class="abs" style="left:1302px;top:967px;width:57px;height:20px;border:2px solid #107c41"></div>
<div class="abs" style="left:1300px;top:983px;width:6px;height:6px;background:#107c41;border:1px solid #f2f2f2"></div>
<div class="abs" style="left:21px;top:996px;width:1899px;height:1px;background:#d6d6d6"></div>
<div class="abs" style="left:21px;top:255px;width:1px;height:741px;background:#d6d6d6"></div>
<div class="abs" style="left:0;top:997px;width:1920px;height:31px;background:#f0f0f0"></div>
<div class="abs" style="left:20px;top:1003px;width:732px;height:18px;background:#f7f7f7;border-radius:9px"></div>
<svg class="abs" style="left:22px;top:1006px" width="10" height="11" viewBox="0 0 10 11" ><path d="M8.500 1.500v8L1.500 5.500z" fill="#606060"/></svg>
<div class="abs" style="left:715px;top:1007px;width:18px;height:8px;background:#606060;border-radius:4px"></div>
<svg class="abs" style="left:736px;top:1006px" width="10" height="11" viewBox="0 0 10 11" ><path d="M1.500 1.500v8L8.500 5.500z" fill="#606060"/></svg>
<div class="abs" style="left:764px;top:1007px;width:2px;height:2px;background:#424242;box-shadow:0 4px 0 #424242,0 8px 0 #424242"></div>
<svg class="abs" style="left:1374px;top:1005px" width="13" height="13" viewBox="0 0 13 13" ><path d="M6.500 1v11M1 6.500h11" stroke="#424242" stroke-width="1.100"/></svg>
<div class="abs" style="left:1429px;top:1002px;width:1px;height:20px;background:#d0d0d0"></div>
<div class="abs" style="left:1433px;top:1000px;width:95px;height:24px;background:#ffe699;border-radius:5px;"></div>
<div class="t" style="left:1382.6px;width:197.4px;text-align:center;top:1004px;font-size:15.45px;color:#242424;font-family:'DejaVu Sans',sans-serif;direction:rtl;transform:scaleX(0.870);transform-origin:50% 50%;">قاعدة البيانات</div>
<div class="abs" style="left:1534px;top:1002px;width:1px;height:20px;background:#d0d0d0"></div>
<div class="abs" style="left:1538px;top:996px;width:69px;height:28px;background:linear-gradient(#fff,#fbe5d6);border-radius:5px;box-shadow:0 0 2px rgba(0,0,0,.35);"></div>
<div class="t" style="left:1485.0px;width:173.2px;text-align:center;top:1001px;font-size:16.08px;color:#242424;font-family:'DejaVu Sans',sans-serif;direction:rtl;transform:scaleX(0.833);transform-origin:50% 50%;">الداشبورد</div>
<div class="abs" style="left:1545px;top:1018.500px;width:53px;height:2px;background:#107c41"></div>
<div class="abs" style="left:1612px;top:1002px;width:1px;height:20px;background:#d0d0d0"></div>
<div class="abs" style="left:1616px;top:1000px;width:81px;height:24px;background:#f8cbad;border-radius:5px;"></div>
<div class="t" style="left:1564.8px;width:184.5px;text-align:center;top:1004px;font-size:15.23px;color:#242424;font-family:'DejaVu Sans',sans-serif;direction:rtl;transform:scaleX(0.870);transform-origin:50% 50%;">إدارة المهام</div>
<div class="abs" style="left:1702px;top:1002px;width:1px;height:20px;background:#d0d0d0"></div>
<div class="abs" style="left:1706px;top:1000px;width:96px;height:24px;background:#adb9ca;border-radius:5px;"></div>
<div class="t" style="left:1655.6px;width:199.8px;text-align:center;top:1004px;font-size:15.35px;color:#242424;font-family:'DejaVu Sans',sans-serif;direction:rtl;transform:scaleX(0.870);transform-origin:50% 50%;">إدارة المشاريع</div>
<svg class="abs" style="left:1850px;top:1005px" width="10" height="13" viewBox="0 0 10 13" ><path d="M7.500 1.500L2 6.500l5.500 5" fill="none" stroke="#8a8a8a" stroke-width="1.200"/></svg>
<svg class="abs" style="left:1883px;top:1005px" width="10" height="13" viewBox="0 0 10 13" ><path d="M2.500 1.500L8 6.500l-5.500 5" fill="none" stroke="#8a8a8a" stroke-width="1.200"/></svg>
<div class="abs" style="left:0;top:1028px;width:1920px;height:1px;background:#e0e0e0"></div>
<div class="abs" style="left:0;top:1029px;width:1920px;height:22px;background:#f3f3f3"></div>
<div class="abs" style="left:0;top:1050px;width:1920px;height:1px;background:#1f1f1f"></div>
<div class="t" style="left:11.0px;top:1034px;font-size:11.00px;letter-spacing:-0.20px;">Ready</div>
<svg class="abs" style="left:62px;top:1033px" width="15" height="13" viewBox="0 0 15 13" ><rect x="1.500" y="1.500" width="12" height="10" rx="1" fill="none" stroke="#424242" stroke-width="1"/><path d="M1.500 4.500h12M4 7h3M4 9.500h2" stroke="#424242" stroke-width="1"/><circle cx="10" cy="8.500" r="2.300" fill="#f3f3f3" stroke="#424242" stroke-width="1"/><circle cx="10" cy="8.500" r=".8" fill="#424242"/></svg>
<svg class="abs" style="left:93px;top:1032px" width="16" height="15" viewBox="0 0 16 15" ><circle cx="6.500" cy="2.500" r="1.600" fill="none" stroke="#424242" stroke-width="1"/><path d="M1 5.500l4 1v3L3 14M12 5.500l-4 1v3l1.500 2" fill="none" stroke="#424242" stroke-width="1.100"/><path d="M9.500 9.500l5 5M14.500 9.500l-5 5" stroke="#424242" stroke-width="1.100"/></svg>
<div class="t" style="left:112.0px;top:1034px;font-size:10.55px;font-weight:bold;color:#242424;">Accessibility: Investigate</div>
<div class="abs" style="left:1622px;top:1029px;width:38px;height:21px;background:#e0e0e0"></div>
<svg class="abs" style="left:1632px;top:1032px" width="15" height="14" viewBox="0 0 15 14" ><rect x="1.500" y="1.500" width="12" height="11" fill="none" stroke="#424242" stroke-width="1"/><path d="M1.500 5h12M1.500 9h12M5.500 1.500v11M9.500 1.500v11" stroke="#424242" stroke-width="1"/></svg>
<svg class="abs" style="left:1672px;top:1032px" width="15" height="14" viewBox="0 0 15 14" ><rect x="1.500" y="1.500" width="12" height="11" fill="none" stroke="#424242" stroke-width="1"/><rect x="4" y="4" width="7" height="6.500" fill="none" stroke="#424242" stroke-width="1"/><path d="M5.500 6h4M5.500 8.500h4" stroke="#424242" stroke-width=".8"/></svg>
<svg class="abs" style="left:1712px;top:1032px" width="15" height="14" viewBox="0 0 15 14" ><rect x="1.500" y="1.500" width="12" height="11" fill="none" stroke="#424242" stroke-width="1"/><path d="M5.500 1.500v5h5v-5M1.500 9.500h12" fill="none" stroke="#424242" stroke-width="1"/></svg>
<div class="abs" style="left:1745px;top:1039px;width:8px;height:1px;background:#424242"></div>
<div class="abs" style="left:1759px;top:1039px;width:100px;height:1px;background:#767676"></div>
<div class="abs" style="left:1809px;top:1036px;width:1px;height:7px;background:#767676"></div>
<div class="abs" style="left:1799px;top:1033px;width:5px;height:13px;background:#5e5e5e;border-radius:1px"></div>
<svg class="abs" style="left:1862px;top:1034px" width="11" height="11" viewBox="0 0 11 11" ><path d="M5.500 1v9M1 5.500h9" stroke="#424242" stroke-width="1"/></svg>
<div class="t" style="left:1885.0px;top:1035px;font-size:11.49px;">85%</div>
<div id="dash" class="abs" style="left:0;top:0;width:1898px;height:996px;overflow:hidden">
<div class="abs" style="left:164px;top:259px;width:1723px;height:52px;background:#767171"></div>
<div class="t" style="left:1449.0px;width:410.0px;text-align:right;top:270px;font-size:29.23px;color:#fff;font-family:'DejaVu Sans',sans-serif;direction:rtl;transform:scaleX(0.735);transform-origin:100% 50%;font-weight:bold;">ملخص تحليل المهام</div>
<div class="card" style="left:154.0px;top:319.0px;width:489.0px;height:629.0px;border-radius:10px"></div>
<div class="t" style="left:307.0px;width:183.0px;text-align:center;top:328px;font-size:17.14px;color:#595959;font-family:'DejaVu Sans',sans-serif;direction:rtl;transform:scaleX(0.909);transform-origin:50% 50%;">الموظفين</div>
<div class="dash" style="left:321.5px;top:359px;width:153.0px"></div>
<div class="abs" style="left:248px;top:376px;width:1px;height:555px;background:#d9d9d9"></div>
<div class="abs" style="left:249px;top:408px;width:300.5px;height:28.500px;background:#b4c7e7"></div>
<div class="t" style="left:460.0px;width:200px;text-align:center;top:417px;font-size:12.5px;color:#404040;font-weight:bold;">2</div>
<div class="t" style="left:22.5px;width:214.0px;text-align:right;top:415px;font-size:13.80px;color:#4a4a4a;font-family:'DejaVu Sans',sans-serif;direction:rtl;transform:scaleX(0.769);transform-origin:100% 50%;-webkit-text-stroke:.3px #4a4a4a;">إلاء</div>
<div class="abs" style="left:249px;top:500px;width:300.5px;height:28.500px;background:#b4c7e7"></div>
<div class="t" style="left:460.0px;width:200px;text-align:center;top:510px;font-size:12.5px;color:#404040;font-weight:bold;">2</div>
<div class="t" style="left:-25.0px;width:261.5px;text-align:right;top:508px;font-size:12.60px;color:#4a4a4a;font-family:'DejaVu Sans',sans-serif;direction:rtl;transform:scaleX(0.769);transform-origin:100% 50%;-webkit-text-stroke:.3px #4a4a4a;">محمد عبدالقادر</div>
<div class="abs" style="left:249px;top:593px;width:150px;height:28.500px;background:#b4c7e7"></div>
<div class="t" style="left:309.5px;width:200px;text-align:center;top:602px;font-size:12.5px;color:#404040;font-weight:bold;">1</div>
<div class="t" style="left:20.2px;width:216.3px;text-align:right;top:600px;font-size:12.03px;color:#4a4a4a;font-family:'DejaVu Sans',sans-serif;direction:rtl;transform:scaleX(0.769);transform-origin:100% 50%;-webkit-text-stroke:.3px #4a4a4a;">علي</div>
<div class="abs" style="left:249px;top:685px;width:150px;height:28.500px;background:#b4c7e7"></div>
<div class="t" style="left:309.5px;width:200px;text-align:center;top:694px;font-size:12.5px;color:#404040;font-weight:bold;">1</div>
<div class="t" style="left:18.0px;width:218.5px;text-align:right;top:692px;font-size:13.10px;color:#4a4a4a;font-family:'DejaVu Sans',sans-serif;direction:rtl;transform:scaleX(0.769);transform-origin:100% 50%;-webkit-text-stroke:.3px #4a4a4a;">لاري</div>
<div class="abs" style="left:249px;top:778px;width:150px;height:28.500px;background:#b4c7e7"></div>
<div class="t" style="left:309.5px;width:200px;text-align:center;top:787px;font-size:12.5px;color:#404040;font-weight:bold;">1</div>
<div class="t" style="left:9.0px;width:227.5px;text-align:right;top:785px;font-size:12.41px;color:#4a4a4a;font-family:'DejaVu Sans',sans-serif;direction:rtl;transform:scaleX(0.769);transform-origin:100% 50%;-webkit-text-stroke:.3px #4a4a4a;">ابراهيم</div>
<div class="t" style="left:200.5px;top:879px;font-size:10.83px;font-weight:bold;color:#595959;">(blank)</div>
<div class="card" style="left:658.0px;top:318.0px;width:489.0px;height:630.0px;border-radius:10px"></div>
<div class="t" style="left:812.5px;width:179.5px;text-align:center;top:327px;font-size:17.93px;color:#595959;font-family:'DejaVu Sans',sans-serif;direction:rtl;transform:scaleX(0.909);transform-origin:50% 50%;">المشاريع</div>
<div class="dash" style="left:825.5px;top:358px;width:153.0px"></div>
<div class="abs" style="left:722px;top:363px;width:1px;height:559px;background:#d9d9d9"></div>
<div class="abs" style="left:723px;top:398px;width:363.5px;height:39.500px;background:#adb9ca"></div>
<div class="t" style="left:997.0px;width:200px;text-align:center;top:413px;font-size:12.5px;color:#404040;font-weight:bold;">4</div>
<div class="t" style="left:471.0px;width:240.0px;text-align:right;top:411px;font-size:13.41px;color:#4a4a4a;font-family:'DejaVu Sans',sans-serif;direction:rtl;transform:scaleX(0.769);transform-origin:100% 50%;-webkit-text-stroke:.3px #4a4a4a;">مشورع ٢</div>
<div class="abs" style="left:723px;top:510px;width:90.5px;height:39.500px;background:#adb9ca"></div>
<div class="t" style="left:724.0px;width:200px;text-align:center;top:525px;font-size:12.5px;color:#404040;font-weight:bold;">1</div>
<div class="t" style="left:471.0px;width:240.0px;text-align:right;top:522px;font-size:13.28px;color:#4a4a4a;font-family:'DejaVu Sans',sans-serif;direction:rtl;transform:scaleX(0.769);transform-origin:100% 50%;-webkit-text-stroke:.3px #4a4a4a;">مشروع ٤</div>
<div class="abs" style="left:723px;top:622px;width:90.5px;height:39.500px;background:#adb9ca"></div>
<div class="t" style="left:724.0px;width:200px;text-align:center;top:637px;font-size:12.5px;color:#404040;font-weight:bold;">1</div>
<div class="t" style="left:474.0px;width:237.0px;text-align:right;top:634px;font-size:13.37px;color:#4a4a4a;font-family:'DejaVu Sans',sans-serif;direction:rtl;transform:scaleX(0.769);transform-origin:100% 50%;-webkit-text-stroke:.3px #4a4a4a;">مشروع٣</div>
<div class="abs" style="left:723px;top:734px;width:90.5px;height:39.500px;background:#adb9ca"></div>
<div class="t" style="left:724.0px;width:200px;text-align:center;top:749px;font-size:12.5px;color:#404040;font-weight:bold;">1</div>
<div class="t" style="left:471.0px;width:240.0px;text-align:right;top:746px;font-size:13.28px;color:#4a4a4a;font-family:'DejaVu Sans',sans-serif;direction:rtl;transform:scaleX(0.769);transform-origin:100% 50%;-webkit-text-stroke:.3px #4a4a4a;">مشروع ١</div>
<div class="t" style="left:675.0px;top:860px;font-size:10.98px;font-weight:bold;color:#595959;">(blank)</div>
<div class="card" style="left:1161.0px;top:319.0px;width:256.0px;height:211.0px;border-radius:10px"></div>
<div class="t" style="left:1189.0px;width:196.0px;text-align:center;top:332px;font-size:17.11px;color:#595959;font-family:'DejaVu Sans',sans-serif;direction:rtl;transform:scaleX(0.909);transform-origin:50% 50%;">نسبة الانجاز</div>
<div class="dash" style="left:1213.0px;top:360px;width:148.0px"></div>
<svg class="abs" style="left:1170px;top:360px" width="240" height="112" viewBox="0 0 240 112" ><path d="M16.70 107.00A99 99 0 0 1 35.61 48.81L62.95 68.68A65.2 65.2 0 0 0 50.50 107.00Z" fill="#fc5c5c" stroke="#fff" stroke-width="1.600"/><path d="M35.61 48.81A99 99 0 0 1 85.11 12.85L95.55 44.99A65.2 65.2 0 0 0 62.95 68.68Z" fill="#ed8b3f" stroke="#fff" stroke-width="1.600"/><path d="M85.11 12.85A99 99 0 0 1 146.29 12.85L135.85 44.99A65.2 65.2 0 0 0 95.55 44.99Z" fill="#ffd966" stroke="#fff" stroke-width="1.600"/><path d="M146.29 12.85A99 99 0 0 1 195.79 48.81L168.45 68.68A65.2 65.2 0 0 0 135.85 44.99Z" fill="#c5e0b4" stroke="#fff" stroke-width="1.600"/><path d="M195.79 48.81A99 99 0 0 1 214.70 107.00L180.90 107.00A65.2 65.2 0 0 0 168.45 68.68Z" fill="#86bc5f" stroke="#fff" stroke-width="1.600"/><path d="M115.70 107.00L137.05 12.33L143.25 13.94Z" fill="#111"/></svg>
<div class="t" style="left:1192.0px;width:200px;text-align:center;top:487px;font-size:23.5px;color:#3b3b3b;">57%</div>
<div class="card" style="left:1160.0px;top:538.5px;width:259.0px;height:211.5px;border-radius:10px"></div>
<div class="t" style="left:1191.0px;width:200px;text-align:center;top:553px;font-size:17.3px;color:#595959;">Tasks Status</div>
<div class="dash" style="left:1224.0px;top:578px;width:122.0px"></div>
<svg class="abs" style="left:1180px;top:580px" width="170" height="170" viewBox="0 0 170 170" ><path d="M82.60 83.00L82.60 6.00A77 77 0 1 1 49.20 152.38Z" fill="#a9d18e" stroke="#fff" stroke-width="2.200" stroke-linejoin="round"/><path d="M82.60 83.00L49.20 152.38A77 77 0 0 1 22.40 34.99Z" fill="#ffd966" stroke="#fff" stroke-width="2.200" stroke-linejoin="round"/><path d="M82.60 83.00L22.40 34.99A77 77 0 0 1 82.60 6.00Z" fill="#a5a5a5" stroke="#fff" stroke-width="2.200" stroke-linejoin="round"/></svg>
<div class="t" style="left:1218.6px;width:200px;text-align:center;top:676px;font-size:10.8px;color:#404040;font-weight:bold;letter-spacing:-0.2px;">57%</div>
<div class="t" style="left:1103.0px;width:200px;text-align:center;top:671px;font-size:10.8px;color:#404040;font-weight:bold;letter-spacing:-0.2px;">29%</div>
<div class="t" style="left:1136.5px;width:200px;text-align:center;top:602px;font-size:10.8px;color:#404040;font-weight:bold;letter-spacing:-0.2px;">14%</div>
<div class="t" style="left:1152.0px;width:200px;text-align:center;top:577px;font-size:10.8px;color:#404040;font-weight:bold;letter-spacing:-0.2px;">0%</div>
<div class="abs" style="left:1360px;top:630.7px;width:4px;height:4px;background:#a9d18e"></div>
<div class="t" style="left:1368.0px;width:221.0px;text-align:left;direction:ltr;top:627px;font-size:9.23px;color:#404040;font-family:'DejaVu Sans',sans-serif;transform:scaleX(0.800);transform-origin:0 50%;font-weight:bold;"><span dir="rtl">انتهت</span></div>
<div class="abs" style="left:1360px;top:651.2px;width:4px;height:4px;background:#ffd966"></div>
<div class="t" style="left:1368.0px;width:246.0px;text-align:left;direction:ltr;top:648px;font-size:9.31px;color:#404040;font-family:'DejaVu Sans',sans-serif;transform:scaleX(0.800);transform-origin:0 50%;font-weight:bold;"><span dir="rtl">جاري التنفيذ</span></div>
<div class="abs" style="left:1360px;top:671.8px;width:4px;height:4px;background:#a5a5a5"></div>
<div class="t" style="left:1368.0px;width:220.0px;text-align:left;direction:ltr;top:669px;font-size:8.57px;color:#404040;font-family:'DejaVu Sans',sans-serif;transform:scaleX(0.800);transform-origin:0 50%;font-weight:bold;"><span dir="rtl">معلقة</span></div>
<div class="abs" style="left:1360px;top:692.3px;width:4px;height:4px;background:#f4b183"></div>
<div class="t" style="left:1368.0px;width:225.6px;text-align:left;direction:ltr;top:689px;font-size:9.59px;color:#404040;font-family:'DejaVu Sans',sans-serif;transform:scaleX(0.800);transform-origin:0 50%;font-weight:bold;"><span dir="rtl">متأخرة</span></div>
<div class="card" style="left:1160.0px;top:758.0px;width:260.0px;height:184.5px;border-radius:10px"></div>
<div class="t" style="left:1119.5px;width:344.0px;text-align:center;top:774px;font-size:15.57px;color:#595959;font-family:'DejaVu Sans',sans-serif;direction:rtl;">متوسط ايام التأخير للمهمة الواحدة</div>
<div class="dash" style="left:1215.0px;top:801px;width:162.0px"></div>
<div class="t" style="left:1191.4px;width:200px;text-align:center;top:817px;font-size:31.5px;color:#1f3478;">2</div>
<div class="t" style="left:1182.6px;width:210.9px;text-align:center;top:867px;font-size:15.01px;color:#404040;font-family:'DejaVu Sans',sans-serif;direction:rtl;transform:scaleX(0.800);transform-origin:50% 50%;font-weight:bold;">المهام المكتملة</div>
<div class="t" style="left:1226.8px;width:247.2px;text-align:center;top:891px;font-size:12.86px;color:#404040;font-family:'DejaVu Sans',sans-serif;direction:rtl;transform:scaleX(0.769);transform-origin:50% 50%;font-weight:bold;">مبكراً او في الوقت المحدد</div>
<div class="t" style="left:1127.6px;width:154.4px;text-align:center;top:893px;font-size:12.89px;color:#404040;font-family:'DejaVu Sans',sans-serif;direction:rtl;transform:scaleX(0.800);transform-origin:50% 50%;font-weight:bold;">متأخرة</div>
<div class="t" style="left:1109.5px;width:200px;text-align:center;top:914px;font-size:18.5px;color:#d6230f;">2</div>
<div class="t" style="left:1257.0px;width:200px;text-align:center;top:915px;font-size:18.5px;color:#548235;">2</div>
<div class="card" style="left:1430.7px;top:443.6px;width:235.6px;height:144.4px;border-radius:10px"></div>
<div class="t" style="left:1478.4px;width:216.4px;text-align:center;top:464px;font-size:18.68px;color:#595959;font-family:'DejaVu Sans',sans-serif;direction:rtl;transform:scaleX(0.893);transform-origin:50% 50%;">إجمالي المهام</div>
<div class="dash" style="left:1526.4px;top:498px;width:125.9px"></div>
<div class="t" style="left:1490.0px;width:200px;text-align:center;top:520px;font-size:39px;color:#5b2b25;">7</div>
<svg class="abs" style="left:1458px;top:496.5px" width="52" height="62" viewBox="0 0 52 62" ><g fill="none" stroke="#5b2e27" stroke-width="2" stroke-linejoin="round" stroke-linecap="round"><path d="M41 36V8a2.500 2.500 0 0 0-2.500-2.500H31M12 5.500H4.500A2.500 2.500 0 0 0 2 8v46.500A2.500 2.500 0 0 0 4.500 57H29"/><path d="M12 11.500V4.500h6.500a3 3 0 0 1 6 0H31v7z"/><path d="M9 22h25M9 29.500h25M9 37h22M9 44.500h16"/><circle cx="39.500" cy="48.500" r="10"/><path d="M39.500 42v7l-4 3.500"/></g></svg>
<div class="card" style="left:1428.0px;top:596.0px;width:239.3px;height:346.0px;border-radius:10px"></div>
<div class="t" style="left:1468.0px;width:163.0px;text-align:center;top:609px;font-size:18.69px;color:#595959;font-family:'DejaVu Sans',sans-serif;direction:rtl;">أنتهت</div>
<div class="t" style="left:1447.4px;width:200px;text-align:center;top:639px;font-size:31.5px;color:#4e7d46;">4</div>
<div class="dash" style="left:1468.2px;top:676px;width:152.8px"></div>
<div class="t" style="left:1442.4px;width:211.0px;text-align:center;top:688px;font-size:18.11px;color:#595959;font-family:'DejaVu Sans',sans-serif;direction:rtl;">جاري التنفيذ</div>
<div class="t" style="left:1447.8px;width:200px;text-align:center;top:722px;font-size:31.5px;color:#c07a14;">2</div>
<div class="dash" style="left:1468.2px;top:762px;width:152.8px"></div>
<div class="t" style="left:1465.0px;width:164.0px;text-align:center;top:775px;font-size:18.40px;color:#595959;font-family:'DejaVu Sans',sans-serif;direction:rtl;">معلقة</div>
<div class="t" style="left:1447.8px;width:200px;text-align:center;top:807px;font-size:31.5px;color:#808080;">1</div>
<div class="dash" style="left:1470.3px;top:847px;width:152.5px"></div>
<div class="t" style="left:1464.3px;width:167.7px;text-align:center;top:859px;font-size:16.82px;color:#595959;font-family:'DejaVu Sans',sans-serif;direction:rtl;">متأخرة</div>
<div class="t" style="left:1447.8px;width:200px;text-align:center;top:894px;font-size:31.5px;color:#d6230f;">0</div>
<div class="t" style="left:627px;top:329px;font-size:8px;color:#d3e4f5">c</div>
<div class="t" style="left:1131px;top:329px;font-size:8px;color:#d3e4f5">c</div>
<div class="t" style="left:1402px;top:330px;font-size:8px;color:#d3e4f5">c</div>
<div class="t" style="left:1404px;top:549px;font-size:8px;color:#d3e4f5">c</div>
<div class="t" style="left:1404px;top:769px;font-size:8px;color:#d3e4f5">c</div>
<div class="t" style="left:1651px;top:456px;font-size:8px;color:#d3e4f5">c</div>
<div class="abs" style="left:1432px;top:314px;width:456px;height:119.5px;background:#fff;border:1px solid #ed7d31"></div>
<div class="t" style="left:1660.6px;width:220.7px;text-align:right;top:320px;font-size:10.25px;color:#000;font-family:'DejaVu Sans',sans-serif;direction:rtl;transform:scaleX(0.833);transform-origin:100% 50%;font-weight:bold;">تاريخ</div>
<div class="abs" style="left:1439px;top:338px;width:442px;height:1px;background:#ed7d31"></div>
<svg class="abs" style="left:1439px;top:319px" width="15" height="15" viewBox="0 0 15 15" ><path d="M1 1.500h10L7.300 6v5.500L5 9.500V6z" fill="#b0b0b0" stroke="#b0b0b0" stroke-width=".800" stroke-linejoin="round"/><path d="M8.500 8.500l4.500 4.500M13 8.500l-4.500 4.500" stroke="#b0b0b0" stroke-width="1"/></svg>
<div class="t" style="left:1831.0px;top:345px;font-size:9.77px;color:#ed7d31;">All Periods</div>
<div class="t" style="left:1461.7px;width:209.8px;text-align:left;direction:ltr;top:346px;font-size:7.78px;color:#7f7f7f;font-family:'DejaVu Sans',sans-serif;transform:scaleX(0.690);transform-origin:0 50%;font-weight:bold;"><span dir="rtl">أيام</span></div>
<svg class="abs" style="left:1441px;top:348px" width="8" height="5" viewBox="0 0 8 5" ><path d="M1 1h6L4 4z" fill="#8a8a8a"/></svg>
<div class="t ar" style="left:1700px;width:181.500px;text-align:right;top:365px;font-size:7.600px;color:#595959"><span style="font-family:'DejaVu Sans',sans-serif">سبتمبر</span> <span style="font-family:'Liberation Sans',sans-serif;font-size:8.800px">2024</span></div>
<div class="t" style="left:1773.7px;width:200px;text-align:center;top:383px;font-size:10.2px;color:#767676;">1</div>
<div class="t" style="left:1748.0px;width:200px;text-align:center;top:383px;font-size:10.2px;color:#767676;">2</div>
<div class="t" style="left:1722.4px;width:200px;text-align:center;top:383px;font-size:10.2px;color:#767676;">3</div>
<div class="t" style="left:1696.7px;width:200px;text-align:center;top:383px;font-size:10.2px;color:#767676;">4</div>
<div class="t" style="left:1671.0px;width:200px;text-align:center;top:383px;font-size:10.2px;color:#767676;">5</div>
<div class="t" style="left:1645.3px;width:200px;text-align:center;top:383px;font-size:10.2px;color:#767676;">6</div>
<div class="t" style="left:1619.7px;width:200px;text-align:center;top:383px;font-size:10.2px;color:#767676;">7</div>
<div class="t" style="left:1594.0px;width:200px;text-align:center;top:383px;font-size:10.2px;color:#767676;">8</div>
<div class="t" style="left:1568.3px;width:200px;text-align:center;top:383px;font-size:10.2px;color:#767676;">9</div>
<div class="t" style="left:1542.7px;width:200px;text-align:center;top:383px;font-size:10.2px;color:#767676;">10</div>
<div class="t" style="left:1517.0px;width:200px;text-align:center;top:383px;font-size:10.2px;color:#767676;">11</div>
<div class="t" style="left:1491.3px;width:200px;text-align:center;top:383px;font-size:10.2px;color:#767676;">12</div>
<div class="t" style="left:1465.7px;width:200px;text-align:center;top:383px;font-size:10.2px;color:#767676;">13</div>
<div class="t" style="left:1440.0px;width:200px;text-align:center;top:383px;font-size:10.2px;color:#767676;">14</div>
<div class="t" style="left:1414.3px;width:200px;text-align:center;top:383px;font-size:10.2px;color:#767676;">15</div>
<div class="t" style="left:1388.7px;width:200px;text-align:center;top:383px;font-size:10.2px;color:#767676;">16</div>
<div class="t" style="left:1363.0px;width:200px;text-align:center;top:383px;font-size:10.2px;color:#767676;">17</div>
<div class="abs" style="left:1437px;top:381px;width:8px;height:12px;overflow:hidden"><div class="t" style="left:-5px;top:1px;font-size:10.200px;color:#767676">18</div></div>
<div class="abs" style="left:1439px;top:396px;width:441.500px;height:15px;background:linear-gradient(#f8c9a8 0,#f4b183 40%,#ef8b47 85%,#ed7d31 100%)"></div>
<div class="abs" style="left:1854.5px;top:396px;width:1px;height:15px;background:rgba(255,255,255,.35)"></div>
<div class="abs" style="left:1828.9px;top:396px;width:1px;height:15px;background:rgba(255,255,255,.35)"></div>
<div class="abs" style="left:1803.2px;top:396px;width:1px;height:15px;background:rgba(255,255,255,.35)"></div>
<div class="abs" style="left:1777.5px;top:396px;width:1px;height:15px;background:rgba(255,255,255,.35)"></div>
<div class="abs" style="left:1751.8px;top:396px;width:1px;height:15px;background:rgba(255,255,255,.35)"></div>
<div class="abs" style="left:1726.2px;top:396px;width:1px;height:15px;background:rgba(255,255,255,.35)"></div>
<div class="abs" style="left:1700.5px;top:396px;width:1px;height:15px;background:rgba(255,255,255,.35)"></div>
<div class="abs" style="left:1674.8px;top:396px;width:1px;height:15px;background:rgba(255,255,255,.35)"></div>
<div class="abs" style="left:1649.2px;top:396px;width:1px;height:15px;background:rgba(255,255,255,.35)"></div>
<div class="abs" style="left:1623.5px;top:396px;width:1px;height:15px;background:rgba(255,255,255,.35)"></div>
<div class="abs" style="left:1597.8px;top:396px;width:1px;height:15px;background:rgba(255,255,255,.35)"></div>
<div class="abs" style="left:1572.2px;top:396px;width:1px;height:15px;background:rgba(255,255,255,.35)"></div>
<div class="abs" style="left:1546.5px;top:396px;width:1px;height:15px;background:rgba(255,255,255,.35)"></div>
<div class="abs" style="left:1520.8px;top:396px;width:1px;height:15px;background:rgba(255,255,255,.35)"></div>
<div class="abs" style="left:1495.2px;top:396px;width:1px;height:15px;background:rgba(255,255,255,.35)"></div>
<div class="abs" style="left:1469.5px;top:396px;width:1px;height:15px;background:rgba(255,255,255,.35)"></div>
<div class="abs" style="left:1443.8px;top:396px;width:1px;height:15px;background:rgba(255,255,255,.35)"></div>
<div class="abs" style="left:1452px;top:420px;width:416px;height:6px;background:#fbe0cf"></div>
<div class="abs" style="left:1439px;top:417px;width:12.500px;height:14px;background:#fff;border:1px solid #c8c8c8"></div>
<svg class="abs" style="left:1442px;top:420.5px" width="7" height="7" viewBox="0 0 7 7" ><path d="M5.500 .5v6L1.500 3.500z" fill="#606060"/></svg>
<div class="abs" style="left:1868px;top:417px;width:12.500px;height:14px;background:#fff;border:1px solid #c8c8c8"></div>
<svg class="abs" style="left:1871px;top:420.5px" width="7" height="7" viewBox="0 0 7 7" ><path d="M1.500 .5v6L5.500 3.500z" fill="#606060"/></svg>
<div class="abs" style="left:1571.500px;top:417px;width:19px;height:14px;background:#fff;border:1px solid #b0b0b0"></div>
<div class="abs" style="left:1679px;top:437px;width:209px;height:510.500px;background:#adb9ca"></div>
<div class="sl" style="left:1687px;top:440px;width:198px;height:206px"></div>
<div class="t" style="left:1625.0px;width:252.7px;text-align:right;top:446px;font-size:9.31px;color:#000;font-family:'DejaVu Sans',sans-serif;direction:rtl;transform:scaleX(0.833);transform-origin:100% 50%;font-weight:bold;">اسم المشروع</div>
<svg class="abs" style="left:1723.5px;top:444.6px" width="15" height="15" viewBox="0 0 15 15" ><path d="M1 2.500l1.500 1.500L5 1M1 7l1.500 1.500L5 5.500M1 11.500l1.500 1.500L5 10" fill="none" stroke="#424242" stroke-width=".900"/><path d="M7 3h7M7 7.500h7M7 12h7" stroke="#424242" stroke-width="1"/></svg>
<svg class="abs" style="left:1696px;top:444.1px" width="15" height="15" viewBox="0 0 15 15" ><path d="M1 1.500h11L8 6.500v6.500L5.500 11V6.500z" fill="#fff" stroke="#b0b0b0" stroke-width="1" stroke-linejoin="round"/><path d="M9 9l4.500 4.500M13.500 9L9 13.500" stroke="#b0b0b0" stroke-width="1"/></svg>
<div class="abs" style="left:1695.4px;top:463px;width:182.3px;height:1px;background:#ed7d31"></div>
<div class="abs" style="left:1694.4px;top:467.0px;width:183.6px;height:22px;background:#f8cbad;border:1px solid #b0b0b0;border-radius:4px"></div>
<div class="t" style="left:1632.5px;width:238.0px;text-align:right;top:472px;font-size:11.16px;color:#000;font-family:'DejaVu Sans',sans-serif;direction:rtl;transform:scaleX(0.870);transform-origin:100% 50%;">مشروع ١</div>
<div class="abs" style="left:1694.4px;top:492.0px;width:183.6px;height:22px;background:#f8cbad;border:1px solid #b0b0b0;border-radius:4px"></div>
<div class="t" style="left:1632.5px;width:238.0px;text-align:right;top:497px;font-size:11.16px;color:#000;font-family:'DejaVu Sans',sans-serif;direction:rtl;transform:scaleX(0.870);transform-origin:100% 50%;">مشروع ٤</div>
<div class="abs" style="left:1694.4px;top:517.0px;width:183.6px;height:22px;background:#f8cbad;border:1px solid #b0b0b0;border-radius:4px"></div>
<div class="t" style="left:1634.5px;width:236.0px;text-align:right;top:522px;font-size:11.51px;color:#000;font-family:'DejaVu Sans',sans-serif;direction:rtl;transform:scaleX(0.870);transform-origin:100% 50%;">مشروع٣</div>
<div class="abs" style="left:1694.4px;top:542.0px;width:183.6px;height:22px;background:#f8cbad;border:1px solid #b0b0b0;border-radius:4px"></div>
<div class="t" style="left:1632.5px;width:238.0px;text-align:right;top:547px;font-size:11.27px;color:#000;font-family:'DejaVu Sans',sans-serif;direction:rtl;transform:scaleX(0.870);transform-origin:100% 50%;">مشورع ٢</div>
<div class="abs" style="left:1694.4px;top:567.0px;width:183.6px;height:22px;background:#f8cbad;border:1px solid #b0b0b0;border-radius:4px"></div>
<div class="t" style="left:1832.5px;top:572px;font-size:12.43px;color:#000;">(blank)</div>
<div class="sl" style="left:1689px;top:648px;width:196px;height:185.5px"></div>
<div class="t" style="left:1620.3px;width:256.0px;text-align:right;top:657px;font-size:10.17px;color:#000;font-family:'DejaVu Sans',sans-serif;direction:rtl;transform:scaleX(0.833);transform-origin:100% 50%;font-weight:bold;">اسم الموظف</div>
<svg class="abs" style="left:1725.5px;top:655px" width="15" height="15" viewBox="0 0 15 15" ><path d="M1 2.500l1.500 1.500L5 1M1 7l1.500 1.500L5 5.500M1 11.500l1.500 1.500L5 10" fill="none" stroke="#424242" stroke-width=".900"/><path d="M7 3h7M7 7.500h7M7 12h7" stroke="#424242" stroke-width="1"/></svg>
<svg class="abs" style="left:1698px;top:654.5px" width="15" height="15" viewBox="0 0 15 15" ><path d="M1 1.500h11L8 6.500v6.500L5.500 11V6.500z" fill="#fff" stroke="#b0b0b0" stroke-width="1" stroke-linejoin="round"/><path d="M9 9l4.500 4.500M13.500 9L9 13.500" stroke="#b0b0b0" stroke-width="1"/></svg>
<div class="abs" style="left:1697px;top:673px;width:179.3px;height:1px;background:#ed7d31"></div>
<div class="abs" style="left:1696px;top:676.0px;width:181.0px;height:22px;background:#f8cbad;border:1px solid #b0b0b0;border-radius:4px"></div>
<div class="t" style="left:1640.5px;width:229.0px;text-align:right;top:681px;font-size:11.58px;color:#000;font-family:'DejaVu Sans',sans-serif;direction:rtl;transform:scaleX(0.870);transform-origin:100% 50%;">ابراهيم</div>
<div class="abs" style="left:1696px;top:701.0px;width:181.0px;height:22px;background:#f8cbad;border:1px solid #b0b0b0;border-radius:4px"></div>
<div class="t" style="left:1657.0px;width:212.5px;text-align:right;top:707px;font-size:10.90px;color:#000;font-family:'DejaVu Sans',sans-serif;direction:rtl;transform:scaleX(0.870);transform-origin:100% 50%;">إلاء</div>
<div class="abs" style="left:1696px;top:726.0px;width:181.0px;height:22px;background:#f8cbad;border:1px solid #b0b0b0;border-radius:4px"></div>
<div class="t" style="left:1653.3px;width:216.2px;text-align:right;top:731px;font-size:10.58px;color:#000;font-family:'DejaVu Sans',sans-serif;direction:rtl;transform:scaleX(0.870);transform-origin:100% 50%;">علي</div>
<div class="abs" style="left:1696px;top:751.0px;width:181.0px;height:22px;background:#f8cbad;border:1px solid #b0b0b0;border-radius:4px"></div>
<div class="t" style="left:1650.5px;width:219.0px;text-align:right;top:756px;font-size:11.90px;color:#000;font-family:'DejaVu Sans',sans-serif;direction:rtl;transform:scaleX(0.870);transform-origin:100% 50%;">لارى</div>
<div class="abs" style="left:1696px;top:776.0px;width:181.0px;height:22px;background:#f8cbad;border:1px solid #b0b0b0;border-radius:4px"></div>
<div class="t" style="left:1602.5px;width:267.0px;text-align:right;top:780px;font-size:12.14px;color:#000;font-family:'DejaVu Sans',sans-serif;direction:rtl;transform:scaleX(0.870);transform-origin:100% 50%;">محمد عبدالقادر</div>
<div class="abs" style="left:1696px;top:801.0px;width:181.0px;height:22px;background:#f8cbad;border:1px solid #b0b0b0;border-radius:4px"></div>
<div class="t" style="left:1830.5px;top:807px;font-size:12.76px;color:#000;">(blank)</div>
<div class="sl" style="left:1688px;top:837px;width:196.5px;height:163px"></div>
<div class="t" style="left:1620.3px;width:256.0px;text-align:right;top:845px;font-size:10.17px;color:#000;font-family:'DejaVu Sans',sans-serif;direction:rtl;transform:scaleX(0.833);transform-origin:100% 50%;font-weight:bold;">اسم الموظف</div>
<svg class="abs" style="left:1724.5px;top:843px" width="15" height="15" viewBox="0 0 15 15" ><path d="M1 2.500l1.500 1.500L5 1M1 7l1.500 1.500L5 5.500M1 11.500l1.500 1.500L5 10" fill="none" stroke="#424242" stroke-width=".900"/><path d="M7 3h7M7 7.500h7M7 12h7" stroke="#424242" stroke-width="1"/></svg>
<svg class="abs" style="left:1697px;top:842.5px" width="15" height="15" viewBox="0 0 15 15" ><path d="M1 1.500h11L8 6.500v6.500L5.500 11V6.500z" fill="#fff" stroke="#b0b0b0" stroke-width="1" stroke-linejoin="round"/><path d="M9 9l4.500 4.500M13.500 9L9 13.500" stroke="#b0b0b0" stroke-width="1"/></svg>
<div class="abs" style="left:1697px;top:861px;width:179.3px;height:1px;background:#ed7d31"></div>
<div class="abs" style="left:1696px;top:864.0px;width:181.0px;height:22px;background:#f8cbad;border:1px solid #b0b0b0;border-radius:4px"></div>
<div class="t" style="left:1640.5px;width:229.0px;text-align:right;top:869px;font-size:11.58px;color:#000;font-family:'DejaVu Sans',sans-serif;direction:rtl;transform:scaleX(0.870);transform-origin:100% 50%;">ابراهيم</div>
<div class="abs" style="left:1696px;top:889.0px;width:181.0px;height:22px;background:#f8cbad;border:1px solid #b0b0b0;border-radius:4px"></div>
<div class="t" style="left:1657.0px;width:212.5px;text-align:right;top:895px;font-size:10.90px;color:#000;font-family:'DejaVu Sans',sans-serif;direction:rtl;transform:scaleX(0.870);transform-origin:100% 50%;">إلاء</div>
<div class="abs" style="left:1696px;top:914.0px;width:181.0px;height:22px;background:#f8cbad;border:1px solid #b0b0b0;border-radius:4px"></div>
<div class="t" style="left:1653.3px;width:216.2px;text-align:right;top:919px;font-size:10.58px;color:#000;font-family:'DejaVu Sans',sans-serif;direction:rtl;transform:scaleX(0.870);transform-origin:100% 50%;">علي</div>
<div class="abs" style="left:1696px;top:939.0px;width:181.0px;height:22px;background:#f8cbad;border:1px solid #b0b0b0;border-radius:4px"></div>
<div class="t" style="left:1650.5px;width:219.0px;text-align:right;top:944px;font-size:11.90px;color:#000;font-family:'DejaVu Sans',sans-serif;direction:rtl;transform:scaleX(0.870);transform-origin:100% 50%;">لارى</div>
<div class="abs" style="left:1696px;top:964.0px;width:181.0px;height:22px;background:#f8cbad;border:1px solid #b0b0b0;border-radius:4px"></div>
<div class="t" style="left:1602.5px;width:267.0px;text-align:right;top:968px;font-size:12.14px;color:#000;font-family:'DejaVu Sans',sans-serif;direction:rtl;transform:scaleX(0.870);transform-origin:100% 50%;">محمد عبدالقادر</div>
<div class="abs" style="left:1696px;top:989.0px;width:181.0px;height:22px;background:#f8cbad;border:1px solid #b0b0b0;border-radius:4px"></div>
<div class="t" style="left:1830.5px;top:995px;font-size:12.76px;color:#000;">(blank)</div>
</div>
<div class="t" style="left:744px;width:430px;text-align:center;top:979px;font-size:58px;font-weight:bold;color:#000;opacity:.075;font-family:'DejaVu Sans',sans-serif;direction:rtl;transform:scaleX(1.11);transform-origin:50% 50%;pointer-events:none" id="wm">خمسات</div>
</body></html>
